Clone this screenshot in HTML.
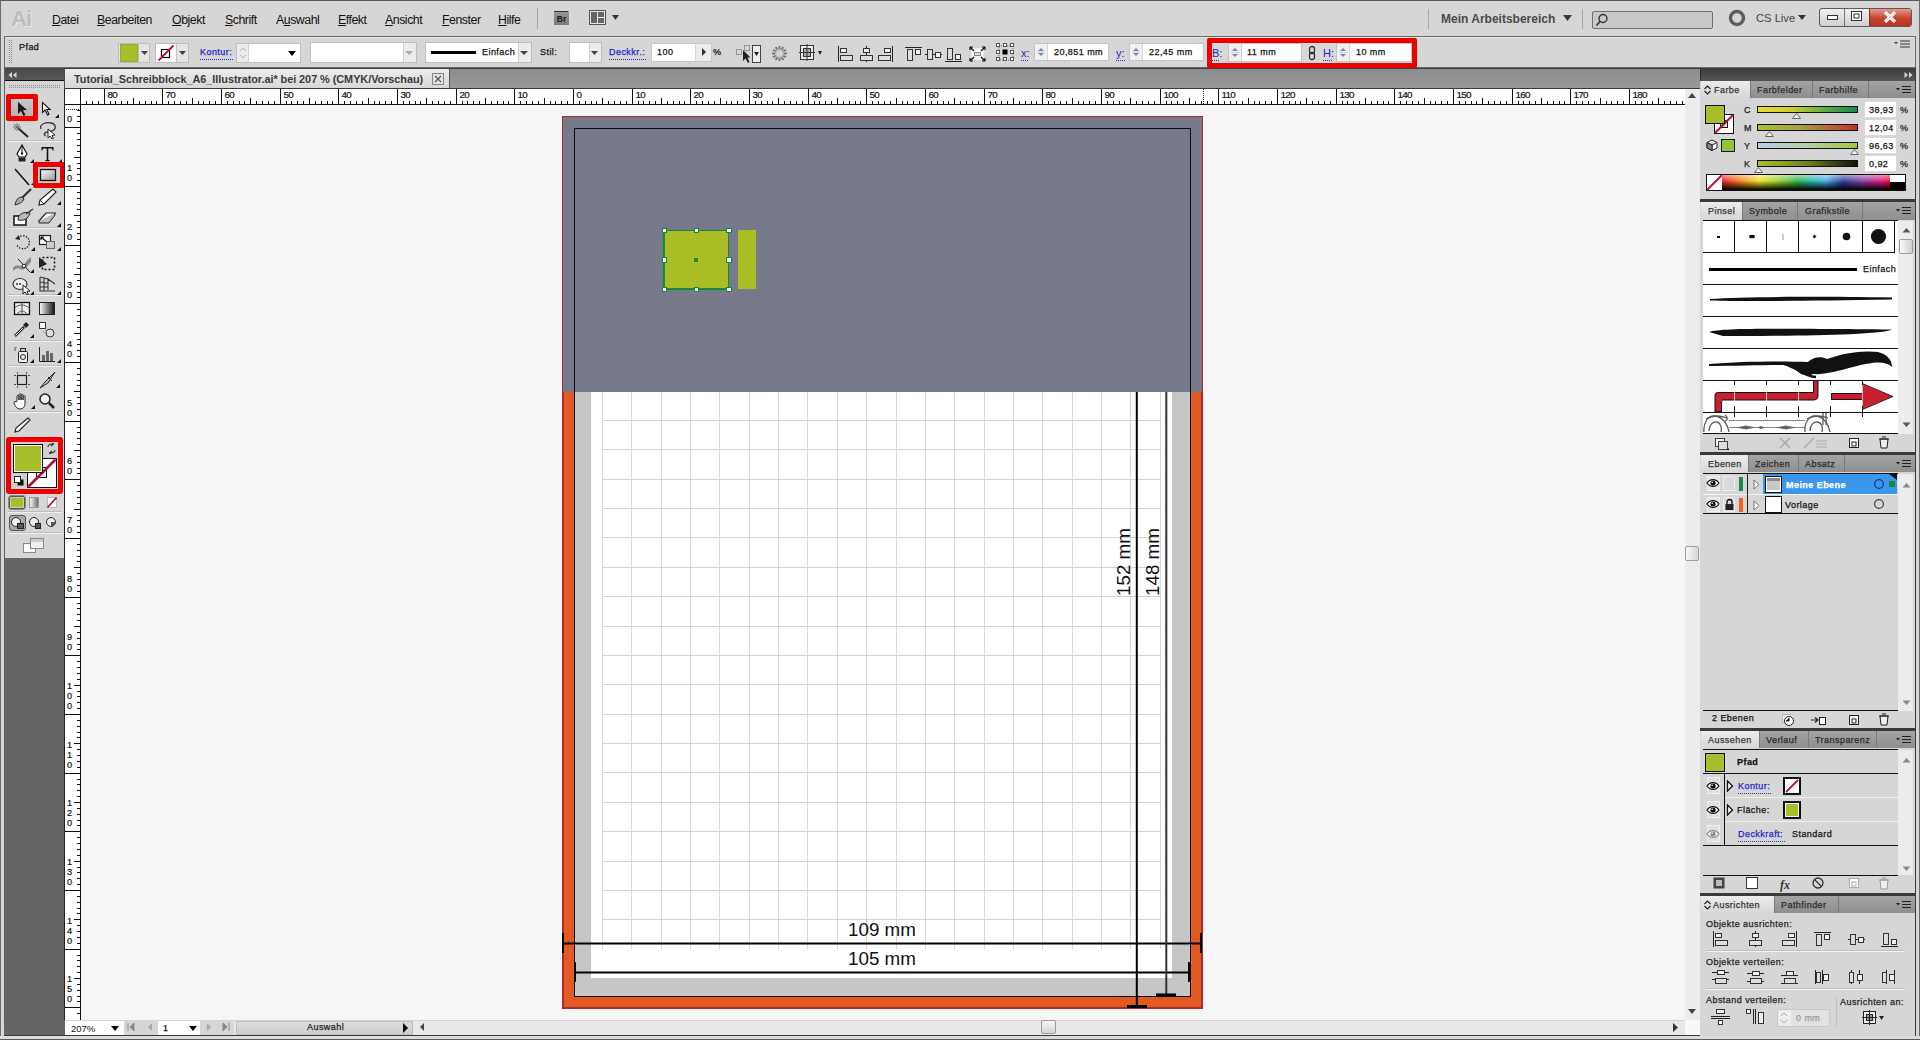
<!DOCTYPE html>
<html><head><meta charset="utf-8"><style>
html,body{margin:0;padding:0;width:1920px;height:1040px;overflow:hidden;background:#d4d4d4}
body{position:relative;font-family:"Liberation Sans", sans-serif}
div,span,svg{position:absolute;}
div div, div span{position:absolute}
span{white-space:nowrap}
</style></head><body>
<div style="left:0px;top:0px;width:1920px;height:1040px;background:#d6d6d6"></div>
<div style="left:0px;top:0px;width:1920px;height:1px;background:#5a5a5a"></div>
<div style="left:0px;top:0px;width:1px;height:1040px;background:#6a6a6a"></div>
<div style="left:1919px;top:0px;width:1px;height:1040px;background:#6a6a6a"></div>
<div style="left:0px;top:1039px;width:1920px;height:1px;background:#5a5a5a"></div>
<span style="left:11px;top:8.38px;font-size:22px;line-height:22px;color:#bdbdbd;font-weight:700;letter-spacing:-1px;text-shadow:1px 1px 0 #e8e8e8">Ai</span>
<span style="left:52px;top:13.99px;font-size:12.3px;line-height:12.3px;color:#111;font-weight:400;letter-spacing:-0.45px"><u>D</u>atei</span>
<span style="left:97px;top:13.99px;font-size:12.3px;line-height:12.3px;color:#111;font-weight:400;letter-spacing:-0.45px"><u>B</u>earbeiten</span>
<span style="left:172px;top:13.99px;font-size:12.3px;line-height:12.3px;color:#111;font-weight:400;letter-spacing:-0.45px"><u>O</u>bjekt</span>
<span style="left:225px;top:13.99px;font-size:12.3px;line-height:12.3px;color:#111;font-weight:400;letter-spacing:-0.45px"><u>S</u>chrift</span>
<span style="left:276px;top:13.99px;font-size:12.3px;line-height:12.3px;color:#111;font-weight:400;letter-spacing:-0.45px">A<u>u</u>swahl</span>
<span style="left:338px;top:13.99px;font-size:12.3px;line-height:12.3px;color:#111;font-weight:400;letter-spacing:-0.45px"><u>E</u>ffekt</span>
<span style="left:385px;top:13.99px;font-size:12.3px;line-height:12.3px;color:#111;font-weight:400;letter-spacing:-0.45px"><u>A</u>nsicht</span>
<span style="left:442px;top:13.99px;font-size:12.3px;line-height:12.3px;color:#111;font-weight:400;letter-spacing:-0.45px"><u>F</u>enster</span>
<span style="left:498px;top:13.99px;font-size:12.3px;line-height:12.3px;color:#111;font-weight:400;letter-spacing:-0.45px"><u>H</u>ilfe</span>
<div style="left:537px;top:8px;width:1px;height:21px;background:#a8a8a8"></div>
<svg style="left:553px;top:10px;" width="18" height="16" viewBox="0 0 18 16"><defs><linearGradient id="brg" x1="0" y1="0" x2="0" y2="1"><stop offset="0" stop-color="#9a9a9a"/><stop offset="1" stop-color="#7a7a7a"/></linearGradient></defs><rect x="1" y="1" width="15" height="14" fill="url(#brg)"/><path d="M1 1.5 H15" stroke="#333"/><text x="8.5" y="12" font-size="8.5" font-family="Liberation Sans" font-weight="700" fill="#1a1a1a" text-anchor="middle">Br</text></svg>
<svg style="left:589px;top:10px;" width="34" height="16" viewBox="0 0 34 16"><rect x="0.5" y="0.5" width="16" height="14" fill="#e8e8e8" stroke="#555"/><rect x="2" y="2" width="6" height="11" fill="#666"/><rect x="9" y="2" width="6" height="5" fill="#666"/><rect x="9" y="8" width="6" height="5" fill="#666"/><path d="M23 5 L30 5 L26.5 10 Z" fill="#333"/></svg>
<div style="left:1428px;top:9px;width:1px;height:20px;background:#a8a8a8"></div>
<span style="left:1441px;top:12.84px;font-size:12px;line-height:12px;color:#4a4a4a;font-weight:700;">Mein Arbeitsbereich</span>
<svg style="left:1563px;top:15px;" width="10" height="7" viewBox="0 0 10 7"><path d="M0 0 L9 0 L4.5 6 Z" fill="#3a3a3a"/></svg>
<div style="left:1582px;top:9px;width:1px;height:20px;background:#a8a8a8"></div>
<div style="left:1592px;top:11px;width:121px;height:18px;background:#c8c8c8;border:1px solid #6f6f6f;border-radius:2px;box-sizing:border-box"></div>
<svg style="left:1595px;top:13px;" width="14" height="14" viewBox="0 0 14 14"><circle cx="8" cy="5.5" r="4" fill="none" stroke="#333" stroke-width="1.4"/><path d="M5 8.5 L1.5 12.5" stroke="#333" stroke-width="1.6"/></svg>
<svg style="left:1728px;top:9px;" width="18" height="18" viewBox="0 0 18 18"><circle cx="9" cy="9" r="6.5" fill="none" stroke="#5c5c5c" stroke-width="3.4"/></svg>
<span style="left:1756px;top:13.02px;font-size:11.2px;line-height:11.2px;color:#444;font-weight:400;">CS Live</span>
<svg style="left:1798px;top:15px;" width="9" height="6" viewBox="0 0 9 6"><path d="M0 0 L8 0 L4 5 Z" fill="#333"/></svg>
<div style="left:1819px;top:8px;width:93px;height:19px;border:1px solid #5a5a5a;border-radius:3px;box-sizing:border-box;background:linear-gradient(#f0f0f0,#cfcfcf);overflow:hidden"><div style="left:24px;top:0;width:1px;height:19px;background:#777"></div><div style="left:49px;top:0;width:44px;height:19px;background:linear-gradient(#e89a8a,#c8402c 50%,#b83020)"></div><div style="left:49px;top:0;width:1px;height:19px;background:#6a3a3a"></div></div>
<svg style="left:1827px;top:15px;" width="12" height="6" viewBox="0 0 12 6"><rect x="0.5" y="0.5" width="10" height="4" fill="#fff" stroke="#333"/></svg>
<svg style="left:1851px;top:11px;" width="12" height="11" viewBox="0 0 12 11"><rect x="0.5" y="0.5" width="10" height="9" fill="#fff" stroke="#333"/><rect x="3" y="3" width="5" height="4" fill="none" stroke="#333"/></svg>
<svg style="left:1883px;top:11px;" width="14" height="12" viewBox="0 0 14 12"><path d="M2 1 L12 11 M12 1 L2 11" stroke="#fff" stroke-width="3.2"/><path d="M2 1 L12 11 M12 1 L2 11" stroke="#7a2a20" stroke-width="0.6" opacity="0.3"/></svg>
<div style="left:4px;top:36px;width:1912px;height:32px;background:#d6d6d6;border:1px solid #6a6a6a;box-sizing:border-box"></div>
<div style="left:5px;top:37px;width:1910px;height:1px;background:#e6e6e6"></div>
<svg style="left:9px;top:40px;" width="4" height="25" viewBox="0 0 4 25"><rect x="0" y="0" width="1" height="1" fill="#8a8a8a"/><rect x="2" y="0" width="1" height="1" fill="#8a8a8a"/><rect x="0" y="2" width="1" height="1" fill="#8a8a8a"/><rect x="2" y="2" width="1" height="1" fill="#8a8a8a"/><rect x="0" y="4" width="1" height="1" fill="#8a8a8a"/><rect x="2" y="4" width="1" height="1" fill="#8a8a8a"/><rect x="0" y="6" width="1" height="1" fill="#8a8a8a"/><rect x="2" y="6" width="1" height="1" fill="#8a8a8a"/><rect x="0" y="8" width="1" height="1" fill="#8a8a8a"/><rect x="2" y="8" width="1" height="1" fill="#8a8a8a"/><rect x="0" y="10" width="1" height="1" fill="#8a8a8a"/><rect x="2" y="10" width="1" height="1" fill="#8a8a8a"/><rect x="0" y="12" width="1" height="1" fill="#8a8a8a"/><rect x="2" y="12" width="1" height="1" fill="#8a8a8a"/><rect x="0" y="14" width="1" height="1" fill="#8a8a8a"/><rect x="2" y="14" width="1" height="1" fill="#8a8a8a"/><rect x="0" y="16" width="1" height="1" fill="#8a8a8a"/><rect x="2" y="16" width="1" height="1" fill="#8a8a8a"/><rect x="0" y="18" width="1" height="1" fill="#8a8a8a"/><rect x="2" y="18" width="1" height="1" fill="#8a8a8a"/><rect x="0" y="20" width="1" height="1" fill="#8a8a8a"/><rect x="2" y="20" width="1" height="1" fill="#8a8a8a"/><rect x="0" y="22" width="1" height="1" fill="#8a8a8a"/><rect x="2" y="22" width="1" height="1" fill="#8a8a8a"/></svg>
<span style="left:19px;top:43.18px;font-size:9.0px;line-height:9.0px;color:#111;font-weight:400;letter-spacing:0.45px;-webkit-text-stroke:0.25px #111;">Pfad</span>
<div style="left:118px;top:43px;width:32px;height:20px;background:#e4e4e4;border:1px solid #bcbcbc;box-sizing:border-box"></div>
<div style="left:120px;top:44px;width:18px;height:18px;background:#a9be2b;border:1px solid #98a830;box-sizing:border-box"></div>
<div style="left:138px;top:44px;width:1px;height:18px;background:#c4c4c4"></div>
<svg style="left:141px;top:51px;" width="8" height="5" viewBox="0 0 8 5"><path d="M0 0 L7 0 L3.5 4 Z" fill="#444"/></svg>
<div style="left:155px;top:43px;width:34px;height:20px;background:#e4e4e4;border:1px solid #bcbcbc;box-sizing:border-box"></div>
<div style="left:156px;top:44px;width:20px;height:18px;background:#fff"></div>
<svg style="left:157px;top:44px;" width="18" height="18" viewBox="0 0 18 18"><rect x="4.5" y="5.5" width="8" height="8" fill="none" stroke="#000" stroke-width="1.2"/><path d="M1.5 16.5 L16.5 1.5" stroke="#b0143c" stroke-width="1.8"/></svg>
<div style="left:176px;top:44px;width:1px;height:18px;background:#c4c4c4"></div>
<svg style="left:179px;top:51px;" width="8" height="5" viewBox="0 0 8 5"><path d="M0 0 L7 0 L3.5 4 Z" fill="#444"/></svg>
<span style="left:200px;top:48.38px;font-size:9.0px;line-height:9.0px;color:#2424c8;font-weight:400;letter-spacing:0.45px;-webkit-text-stroke:0.25px #2424c8;">Kontur:</span>
<div style="left:200px;top:59px;width:33px;height:1px;background:repeating-linear-gradient(90deg,#3030c0 0 1px,transparent 1px 2px)"></div>
<div style="left:236px;top:43px;width:65px;height:20px;background:#fff;border:1px solid #c0c0c0;box-sizing:border-box"></div>
<div style="left:237px;top:44px;width:12px;height:18px;background:#ececec;border-right:1px solid #d0d0d0;box-sizing:border-box"></div>
<svg style="left:239px;top:46px;" width="8" height="14" viewBox="0 0 8 14"><path d="M1 5 L4 2 L7 5" fill="none" stroke="#b0b0b0"/><path d="M1 9 L4 12 L7 9" fill="none" stroke="#b0b0b0"/></svg>
<svg style="left:288px;top:51px;" width="9" height="6" viewBox="0 0 9 6"><path d="M0 0 L8 0 L4 5 Z" fill="#000"/></svg>
<div style="left:310px;top:42px;width:107px;height:21px;background:#fff;border:1px solid #bdbdbd;box-sizing:border-box"></div>
<div style="left:403px;top:43px;width:13px;height:19px;background:#ececec;border-left:1px solid #d0d0d0;box-sizing:border-box"></div>
<svg style="left:405px;top:51px;" width="9" height="5" viewBox="0 0 9 5"><path d="M0 0 L8 0 L4 4 Z" fill="#aaa"/></svg>
<div style="left:425px;top:42px;width:107px;height:21px;background:#fff;border:1px solid #bdbdbd;box-sizing:border-box"></div>
<div style="left:431px;top:51px;width:45px;height:3px;background:#000"></div>
<span style="left:482px;top:48.38px;font-size:9.0px;line-height:9.0px;color:#111;font-weight:400;letter-spacing:0.45px;-webkit-text-stroke:0.25px #111;">Einfach</span>
<div style="left:518px;top:43px;width:13px;height:19px;background:#ececec;border-left:1px solid #d0d0d0;box-sizing:border-box"></div>
<svg style="left:520px;top:51px;" width="9" height="5" viewBox="0 0 9 5"><path d="M0 0 L8 0 L4 4 Z" fill="#444"/></svg>
<span style="left:540px;top:48.38px;font-size:9.0px;line-height:9.0px;color:#111;font-weight:400;letter-spacing:0.45px;-webkit-text-stroke:0.25px #111;">Stil:</span>
<div style="left:569px;top:42px;width:33px;height:21px;background:#fff;border:1px solid #bdbdbd;box-sizing:border-box"></div>
<div style="left:589px;top:43px;width:12px;height:19px;background:#ececec;border-left:1px solid #d0d0d0;box-sizing:border-box"></div>
<svg style="left:591px;top:51px;" width="8" height="5" viewBox="0 0 8 5"><path d="M0 0 L7 0 L3.5 4 Z" fill="#444"/></svg>
<span style="left:609px;top:48.38px;font-size:9.0px;line-height:9.0px;color:#2424c8;font-weight:400;letter-spacing:0.45px;-webkit-text-stroke:0.25px #2424c8;">Deckkr.:</span>
<div style="left:609px;top:59px;width:38px;height:1px;background:repeating-linear-gradient(90deg,#3030c0 0 1px,transparent 1px 2px)"></div>
<div style="left:651px;top:43px;width:61px;height:19px;background:#fff;border:1px solid #c8c8c8;box-sizing:border-box"></div>
<div style="left:695px;top:44px;width:16px;height:17px;background:#ececec;border-left:1px solid #d8d8d8;box-sizing:border-box"></div>
<svg style="left:701px;top:48px;" width="6" height="9" viewBox="0 0 6 9"><path d="M1 0 L5 4 L1 8 Z" fill="#333"/></svg>
<span style="left:657px;top:48.38px;font-size:9.0px;line-height:9.0px;color:#111;font-weight:400;letter-spacing:0.45px;-webkit-text-stroke:0.25px #111;">100</span>
<span style="left:713px;top:48.38px;font-size:9.0px;line-height:9.0px;color:#111;font-weight:400;letter-spacing:0.45px;-webkit-text-stroke:0.25px #111;">%</span>
<svg style="left:735px;top:44px;" width="28" height="20" viewBox="0 0 28 20"><rect x="1.5" y="5.5" width="5" height="5" fill="none" stroke="#555" stroke-dasharray="1 1"/><rect x="9.5" y="1.5" width="5" height="5" fill="none" stroke="#555" stroke-dasharray="1 1"/><path d="M8 6 L8 17 L10.5 14.5 L13 19 L14.5 18 L12.5 13.5 L15.5 13.5 Z" fill="#222"/><rect x="17.5" y="1.5" width="8" height="17" fill="#eee" stroke="#444"/><path d="M19 8 L24 8 L21.5 12 Z" fill="#222"/></svg>
<svg style="left:771px;top:45px;" width="17" height="17" viewBox="0 0 17 17"><path d="M8.5 8.5 L16.00 8.50" stroke="#777" stroke-width="2"/><path d="M8.5 8.5 L15.00 12.25" stroke="#777" stroke-width="2"/><path d="M8.5 8.5 L12.25 15.00" stroke="#777" stroke-width="2"/><path d="M8.5 8.5 L8.50 16.00" stroke="#777" stroke-width="2"/><path d="M8.5 8.5 L4.75 15.00" stroke="#777" stroke-width="2"/><path d="M8.5 8.5 L2.00 12.25" stroke="#777" stroke-width="2"/><path d="M8.5 8.5 L1.00 8.50" stroke="#777" stroke-width="2"/><path d="M8.5 8.5 L2.00 4.75" stroke="#777" stroke-width="2"/><path d="M8.5 8.5 L4.75 2.00" stroke="#777" stroke-width="2"/><path d="M8.5 8.5 L8.50 1.00" stroke="#777" stroke-width="2"/><path d="M8.5 8.5 L12.25 2.00" stroke="#777" stroke-width="2"/><path d="M8.5 8.5 L15.00 4.75" stroke="#777" stroke-width="2"/><circle cx="8.5" cy="8.5" r="4.5" fill="#bbb"/><circle cx="8.5" cy="8.5" r="3" fill="#d6d6d6"/></svg>
<svg style="left:799px;top:44px;" width="24" height="19" viewBox="0 0 24 19"><rect x="1.5" y="1.5" width="13" height="14" fill="#eee" stroke="#333"/><rect x="4.5" y="4.5" width="7" height="8" fill="#aaa" stroke="#333"/><path d="M0 8.5 H16 M8 0 V17" stroke="#333"/><path d="M19 7 L23 7 L21 11 Z" fill="#222"/></svg>
<svg style="left:837px;top:46px;" width="17" height="16" viewBox="0 0 17 16"><path d="M1.5 0 V16" stroke="#222"/><rect x="3.5" y="2.5" width="6" height="4" fill="#eee" stroke="#333"/><rect x="3.5" y="9.5" width="12" height="5" fill="#ddd" stroke="#333"/></svg>
<svg style="left:858px;top:46px;" width="17" height="16" viewBox="0 0 17 16"><path d="M8.5 0 V16" stroke="#222"/><rect x="5.5" y="2.5" width="6" height="4" fill="#eee" stroke="#333"/><rect x="2.5" y="9.5" width="12" height="5" fill="#ddd" stroke="#333"/></svg>
<svg style="left:877px;top:46px;" width="17" height="16" viewBox="0 0 17 16"><path d="M15.5 0 V16" stroke="#222"/><rect x="7.5" y="2.5" width="6" height="4" fill="#eee" stroke="#333"/><rect x="1.5" y="9.5" width="12" height="5" fill="#ddd" stroke="#333"/></svg>
<svg style="left:905px;top:46px;" width="17" height="16" viewBox="0 0 17 16"><path d="M0 1.5 H17" stroke="#222"/><rect x="2.5" y="3.5" width="5" height="11" fill="#ddd" stroke="#333"/><rect x="10.5" y="3.5" width="5" height="5" fill="#eee" stroke="#333"/></svg>
<svg style="left:925px;top:46px;" width="17" height="16" viewBox="0 0 17 16"><path d="M0 8.5 H17" stroke="#222"/><rect x="2.5" y="3.5" width="5" height="10" fill="#ddd" stroke="#333"/><rect x="10.5" y="6.5" width="5" height="5" fill="#eee" stroke="#333"/></svg>
<svg style="left:945px;top:46px;" width="17" height="16" viewBox="0 0 17 16"><path d="M0 15.5 H17" stroke="#222"/><rect x="2.5" y="2.5" width="5" height="11" fill="#ddd" stroke="#333"/><rect x="10.5" y="8.5" width="5" height="5" fill="#eee" stroke="#333"/></svg>
<svg style="left:969px;top:46px;" width="17" height="16" viewBox="0 0 17 16"><rect x="2.5" y="2.5" width="12" height="11" fill="#fff"/><rect x="5.5" y="6.5" width="6" height="3" fill="#ddd" stroke="#888"/><path d="M1 1 L5 5 M16 1 L12 5 M1 15 L5 11 M16 15 L12 11" stroke="#111" stroke-width="1.4"/><path d="M1 1 h3 M1 1 v3 M16 1 h-3 M16 1 v3 M1 15 h3 M1 15 v-3 M16 15 h-3 M16 15 v-3" stroke="#111" stroke-width="1.2"/></svg>
<svg style="left:996px;top:43px;" width="20" height="20" viewBox="0 0 20 20"><rect x="3" y="3" width="14" height="14" fill="none" stroke="#666" stroke-dasharray="1 1"/><rect x="0.5" y="0.5" width="3" height="3" fill="#fff" stroke="#555"/><rect x="0.5" y="7.5" width="3" height="3" fill="#fff" stroke="#555"/><rect x="0.5" y="14.5" width="3" height="3" fill="#fff" stroke="#555"/><rect x="7.5" y="0.5" width="3" height="3" fill="#fff" stroke="#555"/><rect x="6.5" y="6.5" width="5" height="5" fill="#000"/><rect x="7.5" y="14.5" width="3" height="3" fill="#fff" stroke="#555"/><rect x="14.5" y="0.5" width="3" height="3" fill="#fff" stroke="#555"/><rect x="14.5" y="7.5" width="3" height="3" fill="#fff" stroke="#555"/><rect x="14.5" y="14.5" width="3" height="3" fill="#fff" stroke="#555"/></svg>
<span style="left:1021px;top:47.69px;font-size:11px;line-height:11px;color:#2424c8;font-weight:400;">x:</span>
<div style="left:1021px;top:60px;width:8px;height:1px;background:repeating-linear-gradient(90deg,#3030c0 0 1px,transparent 1px 2px)"></div>
<div style="left:1034px;top:43px;width:75px;height:18px;background:#fff;border:1px solid #c4c4c4;box-sizing:border-box"></div>
<div style="left:1035px;top:44px;width:13px;height:16px;background:#f0f0f0;border-right:1px solid #d4d4d4;box-sizing:border-box"></div>
<svg style="left:1036px;top:45px;" width="10" height="14" viewBox="0 0 10 14"><path d="M2 6 L5 3 L8 6 Z" fill="#7a82b8"/><path d="M2 8 L5 11 L8 8 Z" fill="#7a82b8"/><path d="M1 7.0 H9" stroke="#d0d0d0"/></svg>
<span style="left:1054px;top:48.38px;font-size:9.0px;line-height:9.0px;color:#111;font-weight:400;letter-spacing:0.45px;-webkit-text-stroke:0.25px #111;">20,851 mm</span>
<span style="left:1116px;top:47.69px;font-size:11px;line-height:11px;color:#2424c8;font-weight:400;">y:</span>
<div style="left:1116px;top:60px;width:10px;height:1px;background:repeating-linear-gradient(90deg,#3030c0 0 1px,transparent 1px 2px)"></div>
<div style="left:1129px;top:43px;width:75px;height:18px;background:#fff;border:1px solid #c4c4c4;box-sizing:border-box"></div>
<div style="left:1130px;top:44px;width:13px;height:16px;background:#f0f0f0;border-right:1px solid #d4d4d4;box-sizing:border-box"></div>
<svg style="left:1131px;top:45px;" width="10" height="14" viewBox="0 0 10 14"><path d="M2 6 L5 3 L8 6 Z" fill="#7a82b8"/><path d="M2 8 L5 11 L8 8 Z" fill="#7a82b8"/><path d="M1 7.0 H9" stroke="#d0d0d0"/></svg>
<span style="left:1149px;top:48.38px;font-size:9.0px;line-height:9.0px;color:#111;font-weight:400;letter-spacing:0.45px;-webkit-text-stroke:0.25px #111;">22,45 mm</span>
<div style="left:1207px;top:38px;width:210px;height:30px;background:#c8c8c8;border:5px solid #ee0000;box-sizing:border-box;border-radius:2px"></div>
<div style="left:1212px;top:43px;width:200px;height:20px;background:#d8d8d8"></div>
<span style="left:1212px;top:47.69px;font-size:11px;line-height:11px;color:#2424c8;font-weight:400;">B:</span>
<div style="left:1212px;top:60px;width:8px;height:1px;background:repeating-linear-gradient(90deg,#3030c0 0 1px,transparent 1px 2px)"></div>
<div style="left:1228px;top:43px;width:74px;height:19px;background:#fff;border:1px solid #c4c4c4;box-sizing:border-box"></div>
<div style="left:1229px;top:44px;width:13px;height:17px;background:#f0f0f0;border-right:1px solid #d4d4d4;box-sizing:border-box"></div>
<svg style="left:1230px;top:45px;" width="10" height="15" viewBox="0 0 10 15"><path d="M2 6 L5 3 L8 6 Z" fill="#7a82b8"/><path d="M2 9 L5 12 L8 9 Z" fill="#7a82b8"/><path d="M1 7.5 H9" stroke="#d0d0d0"/></svg>
<span style="left:1247px;top:48.38px;font-size:9.0px;line-height:9.0px;color:#111;font-weight:400;letter-spacing:0.45px;-webkit-text-stroke:0.25px #111;">11 mm</span>
<svg style="left:1307px;top:45px;" width="11" height="17" viewBox="0 0 11 17"><rect x="2.5" y="1.5" width="5" height="7" rx="2.5" fill="none" stroke="#333" stroke-width="1.3"/><rect x="2.5" y="7.5" width="5" height="7" rx="2.5" fill="none" stroke="#333" stroke-width="1.3"/></svg>
<span style="left:1323px;top:47.69px;font-size:11px;line-height:11px;color:#2424c8;font-weight:400;">H:</span>
<div style="left:1323px;top:60px;width:10px;height:1px;background:repeating-linear-gradient(90deg,#3030c0 0 1px,transparent 1px 2px)"></div>
<div style="left:1336px;top:43px;width:76px;height:19px;background:#fff;border:1px solid #c4c4c4;box-sizing:border-box"></div>
<div style="left:1337px;top:44px;width:13px;height:17px;background:#f0f0f0;border-right:1px solid #d4d4d4;box-sizing:border-box"></div>
<svg style="left:1338px;top:45px;" width="10" height="15" viewBox="0 0 10 15"><path d="M2 6 L5 3 L8 6 Z" fill="#7a82b8"/><path d="M2 9 L5 12 L8 9 Z" fill="#7a82b8"/><path d="M1 7.5 H9" stroke="#d0d0d0"/></svg>
<span style="left:1356px;top:48.38px;font-size:9.0px;line-height:9.0px;color:#111;font-weight:400;letter-spacing:0.45px;-webkit-text-stroke:0.25px #111;">10 mm</span>
<svg style="left:1894px;top:40px;" width="18" height="10" viewBox="0 0 18 10"><path d="M0 2 L4 2 L2 4 Z" fill="#333"/><path d="M6 1 H16 M6 4 H16 M6 7 H16" stroke="#333"/></svg>
<div style="left:65px;top:68px;width:1635px;height:21px;background:linear-gradient(#8c8c8c,#999999)"></div>
<div style="left:65px;top:68px;width:1635px;height:1px;background:#3c3c3c"></div>
<div style="left:65px;top:88px;width:1635px;height:1px;background:#3a3a3a"></div>
<div style="left:5px;top:68px;width:59px;height:12px;background:linear-gradient(#484848,#585858)"></div>
<div style="left:5px;top:80px;width:59px;height:1px;background:#111"></div>
<svg style="left:8px;top:72px;" width="9" height="6" viewBox="0 0 9 6"><path d="M4 0 L0.5 3 L4 6 Z M8.5 0 L5 3 L8.5 6 Z" fill="#d8d8d8"/></svg>
<div style="left:65px;top:69px;width:384px;height:19px;background:linear-gradient(#ececec,#d8d8d8)"></div>
<div style="left:449px;top:69px;width:1px;height:19px;background:#555"></div>
<span style="left:74px;top:73.77px;font-size:10.9px;line-height:10.9px;color:#3a3a3a;font-weight:700;letter-spacing:-0.05px">Tutorial_Schreibblock_A6_Illustrator.ai* bei 207 % (CMYK/Vorschau)</span>
<div style="left:432px;top:73px;width:12px;height:12px;background:#e2e2e2;border:1px solid #888;box-sizing:border-box"></div>
<svg style="left:432px;top:73px;" width="12" height="12" viewBox="0 0 12 12"><path d="M3 3 L9 9 M9 3 L3 9" stroke="#555" stroke-width="1.2"/></svg>
<div style="left:1700px;top:68px;width:215px;height:13px;background:linear-gradient(#3c3c3c,#545454)"></div>
<svg style="left:1904px;top:72px;" width="9" height="6" viewBox="0 0 9 6"><path d="M0.5 0 L4 3 L0.5 6 Z M5 0 L8.5 3 L5 6 Z" fill="#d8d8d8"/></svg>
<div style="left:4px;top:81px;width:61px;height:477px;background:#d6d6d6"></div>
<div style="left:4px;top:558px;width:61px;height:477px;background:#656565"></div>
<div style="left:64px;top:68px;width:1px;height:952px;background:#4a4a4a"></div>
<div style="left:4px;top:68px;width:1px;height:952px;background:#5a5a5a"></div>
<svg style="left:9px;top:85px;" width="52" height="4" viewBox="0 0 52 4"><rect x="0" y="0" width="1" height="1" fill="#8a8a8a"/><rect x="0" y="2" width="1" height="1" fill="#8a8a8a"/><rect x="2" y="0" width="1" height="1" fill="#8a8a8a"/><rect x="2" y="2" width="1" height="1" fill="#8a8a8a"/><rect x="4" y="0" width="1" height="1" fill="#8a8a8a"/><rect x="4" y="2" width="1" height="1" fill="#8a8a8a"/><rect x="6" y="0" width="1" height="1" fill="#8a8a8a"/><rect x="6" y="2" width="1" height="1" fill="#8a8a8a"/><rect x="8" y="0" width="1" height="1" fill="#8a8a8a"/><rect x="8" y="2" width="1" height="1" fill="#8a8a8a"/><rect x="10" y="0" width="1" height="1" fill="#8a8a8a"/><rect x="10" y="2" width="1" height="1" fill="#8a8a8a"/><rect x="12" y="0" width="1" height="1" fill="#8a8a8a"/><rect x="12" y="2" width="1" height="1" fill="#8a8a8a"/><rect x="14" y="0" width="1" height="1" fill="#8a8a8a"/><rect x="14" y="2" width="1" height="1" fill="#8a8a8a"/><rect x="16" y="0" width="1" height="1" fill="#8a8a8a"/><rect x="16" y="2" width="1" height="1" fill="#8a8a8a"/><rect x="18" y="0" width="1" height="1" fill="#8a8a8a"/><rect x="18" y="2" width="1" height="1" fill="#8a8a8a"/><rect x="20" y="0" width="1" height="1" fill="#8a8a8a"/><rect x="20" y="2" width="1" height="1" fill="#8a8a8a"/><rect x="22" y="0" width="1" height="1" fill="#8a8a8a"/><rect x="22" y="2" width="1" height="1" fill="#8a8a8a"/><rect x="24" y="0" width="1" height="1" fill="#8a8a8a"/><rect x="24" y="2" width="1" height="1" fill="#8a8a8a"/><rect x="26" y="0" width="1" height="1" fill="#8a8a8a"/><rect x="26" y="2" width="1" height="1" fill="#8a8a8a"/><rect x="28" y="0" width="1" height="1" fill="#8a8a8a"/><rect x="28" y="2" width="1" height="1" fill="#8a8a8a"/><rect x="30" y="0" width="1" height="1" fill="#8a8a8a"/><rect x="30" y="2" width="1" height="1" fill="#8a8a8a"/><rect x="32" y="0" width="1" height="1" fill="#8a8a8a"/><rect x="32" y="2" width="1" height="1" fill="#8a8a8a"/><rect x="34" y="0" width="1" height="1" fill="#8a8a8a"/><rect x="34" y="2" width="1" height="1" fill="#8a8a8a"/><rect x="36" y="0" width="1" height="1" fill="#8a8a8a"/><rect x="36" y="2" width="1" height="1" fill="#8a8a8a"/><rect x="38" y="0" width="1" height="1" fill="#8a8a8a"/><rect x="38" y="2" width="1" height="1" fill="#8a8a8a"/><rect x="40" y="0" width="1" height="1" fill="#8a8a8a"/><rect x="40" y="2" width="1" height="1" fill="#8a8a8a"/><rect x="42" y="0" width="1" height="1" fill="#8a8a8a"/><rect x="42" y="2" width="1" height="1" fill="#8a8a8a"/><rect x="44" y="0" width="1" height="1" fill="#8a8a8a"/><rect x="44" y="2" width="1" height="1" fill="#8a8a8a"/><rect x="46" y="0" width="1" height="1" fill="#8a8a8a"/><rect x="46" y="2" width="1" height="1" fill="#8a8a8a"/><rect x="48" y="0" width="1" height="1" fill="#8a8a8a"/><rect x="48" y="2" width="1" height="1" fill="#8a8a8a"/><rect x="50" y="0" width="1" height="1" fill="#8a8a8a"/><rect x="50" y="2" width="1" height="1" fill="#8a8a8a"/></svg>
<div style="left:8px;top:141px;width:54px;height:1px;background:#f0f0f0"></div>
<div style="left:8px;top:140px;width:54px;height:1px;background:#bdbdbd"></div>
<div style="left:8px;top:228px;width:54px;height:1px;background:#f0f0f0"></div>
<div style="left:8px;top:227px;width:54px;height:1px;background:#bdbdbd"></div>
<div style="left:8px;top:295px;width:54px;height:1px;background:#f0f0f0"></div>
<div style="left:8px;top:294px;width:54px;height:1px;background:#bdbdbd"></div>
<div style="left:8px;top:341px;width:54px;height:1px;background:#f0f0f0"></div>
<div style="left:8px;top:340px;width:54px;height:1px;background:#bdbdbd"></div>
<div style="left:8px;top:366px;width:54px;height:1px;background:#f0f0f0"></div>
<div style="left:8px;top:365px;width:54px;height:1px;background:#bdbdbd"></div>
<div style="left:8px;top:412px;width:54px;height:1px;background:#f0f0f0"></div>
<div style="left:8px;top:411px;width:54px;height:1px;background:#bdbdbd"></div>
<div style="left:8px;top:512px;width:54px;height:1px;background:#f0f0f0"></div>
<div style="left:8px;top:511px;width:54px;height:1px;background:#bdbdbd"></div>
<div style="left:8px;top:533px;width:54px;height:1px;background:#f0f0f0"></div>
<div style="left:8px;top:532px;width:54px;height:1px;background:#bdbdbd"></div>
<div style="left:6px;top:94px;width:32px;height:27px;border:5px solid #ee0000;box-sizing:border-box;border-radius:2px;background:#bdbdbd"></div>
<div style="left:11px;top:99px;width:22px;height:17px;background:linear-gradient(#c8c8c8,#b4b4b4)"></div>
<svg style="left:15px;top:101px;" width="12" height="16" viewBox="0 0 12 16"><path d="M3 1 L3 13 L6 10 L8.5 15 L10.5 14 L8 9 L12 9 Z" fill="#1a1a1a"/></svg>
<svg style="left:41px;top:101px;" width="11" height="16" viewBox="0 0 11 16"><path d="M1.5 1.5 L1.5 11.5 L4 9 L6.5 14 L8 13.2 L5.8 8.5 L9 8.5 Z" fill="#fff" stroke="#111" stroke-width="1.1"/></svg>
<svg style="left:55px;top:114px;" width="4" height="4" viewBox="0 0 4 4"><path d="M4 0 L4 4 L0 4 Z" fill="#111"/></svg>
<svg style="left:12px;top:122px;" width="18" height="16" viewBox="0 0 18 16"><path d="M6 6 L16 15" stroke="#222" stroke-width="2"/><path d="M5 1 V9 M1 5 H9 M2 2 L8 8 M8 2 L2 8" stroke="#666" stroke-width="0.9"/></svg>
<svg style="left:38px;top:121px;" width="20" height="18" viewBox="0 0 20 18"><path d="M3 8 C1 3, 8 1, 13 2 C18 3, 19 8, 14 10 L10 11 C6 11, 5 14, 8 15" fill="none" stroke="#333" stroke-width="1.3"/><path d="M10 8 L10 17 L12 15 L14 18 L15.5 17.5 L14 14.5 L17 14 Z" fill="#fff" stroke="#222"/></svg>
<svg style="left:15px;top:144px;" width="14" height="19" viewBox="0 0 14 19"><path d="M7 1 L12 10 L10 13 L4 13 L2 10 Z" fill="#fff" stroke="#111" stroke-width="1.2"/><path d="M7 2 V9" stroke="#111"/><circle cx="7" cy="9.5" r="1.2" fill="#111"/><rect x="3.5" y="13.5" width="7" height="4" fill="#222"/></svg>
<svg style="left:30px;top:159px;" width="4" height="4" viewBox="0 0 4 4"><path d="M4 0 L4 4 L0 4 Z" fill="#111"/></svg>
<svg style="left:40px;top:146px;" width="15" height="16" viewBox="0 0 15 16"><path d="M1.5 1 H13.5 V4.5 H12.6 L11.9 2.6 H8.3 V13.8 L9.8 14.5 V15.3 H5.2 V14.5 L6.7 13.8 V2.6 H3.1 L2.4 4.5 H1.5 Z" fill="#111"/></svg>
<svg style="left:58px;top:159px;" width="4" height="4" viewBox="0 0 4 4"><path d="M4 0 L4 4 L0 4 Z" fill="#111"/></svg>
<svg style="left:13px;top:167px;" width="18" height="20" viewBox="0 0 18 20"><path d="M2 2 L16 18" stroke="#111" stroke-width="1.5"/></svg>
<svg style="left:31px;top:181px;" width="4" height="4" viewBox="0 0 4 4"><path d="M4 0 L4 4 L0 4 Z" fill="#111"/></svg>
<div style="left:33px;top:162px;width:32px;height:26px;border:5px solid #ee0000;box-sizing:border-box;border-radius:2px;background:#cfcfcf"></div>
<svg style="left:39px;top:168px;" width="19" height="15" viewBox="0 0 19 15"><defs><linearGradient id="rg" x1="0" y1="0" x2="1" y2="1"><stop offset="0" stop-color="#fff"/><stop offset="1" stop-color="#999"/></linearGradient></defs><rect x="1.5" y="1.5" width="15" height="11" fill="url(#rg)" stroke="#111" stroke-width="1.3"/></svg>
<svg style="left:13px;top:188px;" width="20" height="18" viewBox="0 0 20 18"><path d="M18 1 L8 11" stroke="#333" stroke-width="2.2"/><path d="M9 9 C5 9, 3 12, 2 17 C6 16, 10 14, 11 11 Z" fill="#aaa" stroke="#222"/></svg>
<svg style="left:37px;top:188px;" width="20" height="18" viewBox="0 0 20 18"><path d="M16 1 L19 4 L7 16 L2 17 L3 12 Z" fill="#fff" stroke="#222" stroke-width="1.2"/><path d="M3 12 L7 16" stroke="#222"/></svg>
<svg style="left:57px;top:201px;" width="4" height="4" viewBox="0 0 4 4"><path d="M4 0 L4 4 L0 4 Z" fill="#111"/></svg>
<svg style="left:12px;top:208px;" width="22" height="18" viewBox="0 0 22 18"><path d="M2 8 L14 8 L14 17 L2 17 Z" fill="#fff" stroke="#111" stroke-width="1.5"/><path d="M6 12 C6 6, 12 3, 18 5 C16 11, 12 13, 6 12 Z" fill="#bbb" stroke="#222"/><path d="M14 6 L21 1" stroke="#333" stroke-width="1.5"/></svg>
<svg style="left:38px;top:210px;" width="18" height="14" viewBox="0 0 18 14"><path d="M1 11 L8 3 L17 3 L11 11 Z" fill="#fff" stroke="#222" stroke-width="1.2"/><path d="M1 11 L1 13 L11 13 L17 5 L17 3" fill="#bbb" stroke="#222"/></svg>
<svg style="left:57px;top:223px;" width="4" height="4" viewBox="0 0 4 4"><path d="M4 0 L4 4 L0 4 Z" fill="#111"/></svg>
<svg style="left:14px;top:234px;" width="17" height="18" viewBox="0 0 17 18"><path d="M4 4 A6.5 6.5 0 1 1 3 11" fill="none" stroke="#222" stroke-width="1.4" stroke-dasharray="1.4 1.4"/><path d="M1 5 L5 1 L6 6 Z" fill="#222"/></svg>
<svg style="left:31px;top:247px;" width="4" height="4" viewBox="0 0 4 4"><path d="M4 0 L4 4 L0 4 Z" fill="#111"/></svg>
<svg style="left:38px;top:234px;" width="19" height="17" viewBox="0 0 19 17"><rect x="1.5" y="1.5" width="11" height="9" fill="#f4f4f4" stroke="#222" stroke-width="1.2"/><rect x="8.5" y="7.5" width="8" height="7" fill="#ccc" stroke="#666"/><path d="M3 3 L9 8 M3 3 V6 M3 3 H6" stroke="#111" stroke-width="1.2"/></svg>
<svg style="left:57px;top:247px;" width="4" height="4" viewBox="0 0 4 4"><path d="M4 0 L4 4 L0 4 Z" fill="#111"/></svg>
<svg style="left:12px;top:256px;" width="20" height="18" viewBox="0 0 20 18"><path d="M1 12 C5 6, 9 14, 14 6 C16 3, 18 2, 19 1 L19 6 C16 9, 12 16, 8 13 C5 11, 3 13, 1 15 Z" fill="#888"/><path d="M6 3 L18 16" stroke="#222"/><circle cx="12" cy="10" r="1.8" fill="#fff" stroke="#222"/></svg>
<svg style="left:30px;top:269px;" width="4" height="4" viewBox="0 0 4 4"><path d="M4 0 L4 4 L0 4 Z" fill="#111"/></svg>
<svg style="left:38px;top:256px;" width="18" height="16" viewBox="0 0 18 16"><rect x="4.5" y="1.5" width="12" height="12" fill="none" stroke="#111" stroke-width="1.6" stroke-dasharray="2 2"/><path d="M1 1 L1 12 L9 8 Z" fill="#222"/></svg>
<svg style="left:12px;top:277px;" width="22" height="18" viewBox="0 0 22 18"><ellipse cx="8" cy="7" rx="7" ry="5.5" fill="#eee" stroke="#333" stroke-width="1.2"/><circle cx="5" cy="7" r="1" fill="#333"/><circle cx="8" cy="7" r="1" fill="#333"/><path d="M11 8 L11 17 L13 15 L15 18 L16.5 17.5 L15 14.5 L18 14 Z" fill="#fff" stroke="#222"/></svg>
<svg style="left:30px;top:291px;" width="4" height="4" viewBox="0 0 4 4"><path d="M4 0 L4 4 L0 4 Z" fill="#111"/></svg>
<svg style="left:38px;top:276px;" width="19" height="18" viewBox="0 0 19 18"><path d="M2 1 L2 15 L17 15 M2 1 L10 3 L10 14 M2 6 L10 7 M2 11 L10 11 M6 2 V15 M10 3 L17 8" fill="none" stroke="#333" stroke-width="1.1"/></svg>
<svg style="left:57px;top:291px;" width="4" height="4" viewBox="0 0 4 4"><path d="M4 0 L4 4 L0 4 Z" fill="#111"/></svg>
<svg style="left:13px;top:301px;" width="18" height="15" viewBox="0 0 18 15"><rect x="1.5" y="1.5" width="15" height="12" fill="#eee" stroke="#111" stroke-width="1.3"/><path d="M1.5 7 C6 3, 11 3, 16.5 7 M9 1.5 V13.5 M4 13.5 C6 9, 12 9, 14 13.5" fill="none" stroke="#555"/></svg>
<svg style="left:38px;top:301px;" width="18" height="15" viewBox="0 0 18 15"><defs><linearGradient id="gg"><stop offset="0" stop-color="#fff"/><stop offset="1" stop-color="#111"/></linearGradient></defs><rect x="1.5" y="1.5" width="15" height="12" fill="url(#gg)" stroke="#222"/></svg>
<svg style="left:13px;top:321px;" width="17" height="17" viewBox="0 0 17 17"><path d="M2 15 L11 6" stroke="#222" stroke-width="2.5"/><path d="M2.5 14.5 L10 7" stroke="#fff" stroke-width="1"/><path d="M10 4 L13 1 L16 4 L13 7 Z" fill="#222"/></svg>
<svg style="left:30px;top:334px;" width="4" height="4" viewBox="0 0 4 4"><path d="M4 0 L4 4 L0 4 Z" fill="#111"/></svg>
<svg style="left:38px;top:321px;" width="18" height="17" viewBox="0 0 18 17"><rect x="1.5" y="1.5" width="6" height="6" fill="#fff" stroke="#333"/><circle cx="12" cy="12" r="4" fill="#ddd" stroke="#333"/><path d="M7 9 L9 11 M9 8 L10 9 M5 10 L7 12" stroke="#777" stroke-dasharray="1 1"/></svg>
<svg style="left:13px;top:346px;" width="18" height="17" viewBox="0 0 18 17"><rect x="5.5" y="5.5" width="9" height="11" rx="1" fill="#eee" stroke="#222"/><circle cx="10" cy="11" r="2.5" fill="none" stroke="#222"/><rect x="7.5" y="2.5" width="5" height="3" fill="#ccc" stroke="#222"/><path d="M1 2 H3 M1 4 H3 M3 1 V2" stroke="#555"/></svg>
<svg style="left:30px;top:359px;" width="4" height="4" viewBox="0 0 4 4"><path d="M4 0 L4 4 L0 4 Z" fill="#111"/></svg>
<svg style="left:38px;top:346px;" width="18" height="17" viewBox="0 0 18 17"><path d="M1.5 1 V15.5 H17" fill="none" stroke="#222"/><rect x="4" y="9" width="3" height="6" fill="#666"/><rect x="8" y="5" width="3" height="10" fill="#666"/><rect x="12" y="7" width="3" height="8" fill="#666"/></svg>
<svg style="left:57px;top:359px;" width="4" height="4" viewBox="0 0 4 4"><path d="M4 0 L4 4 L0 4 Z" fill="#111"/></svg>
<svg style="left:14px;top:372px;" width="16" height="16" viewBox="0 0 16 16"><rect x="3.5" y="3.5" width="9" height="9" fill="none" stroke="#222" stroke-width="1.2"/><path d="M3.5 0 V2 M12.5 0 V2 M0 3.5 H2 M0 12.5 H2 M14 3.5 H16 M14 12.5 H16 M3.5 14 V16 M12.5 14 V16" stroke="#555"/></svg>
<svg style="left:38px;top:371px;" width="18" height="18" viewBox="0 0 18 18"><path d="M17 1 L7 11 L2 17 L10 12 Z" fill="#bbb" stroke="#222"/><path d="M10 6 L14 10" stroke="#222"/></svg>
<svg style="left:56px;top:384px;" width="4" height="4" viewBox="0 0 4 4"><path d="M4 0 L4 4 L0 4 Z" fill="#111"/></svg>
<svg style="left:13px;top:392px;" width="18" height="18" viewBox="0 0 18 18"><path d="M4 9 V4 C4 3, 6 3, 6 4 V8 V2.5 C6 1.5, 8 1.5, 8 2.5 V8 V3 C8 2, 10 2, 10 3 V8 V4.5 C10 3.5, 12 3.5, 12 4.5 V11 C12 15, 10 17, 7 17 C4 17, 2 14, 1 11 C0.5 9.5, 2 9, 3 10 Z" fill="#fff" stroke="#222"/></svg>
<svg style="left:31px;top:405px;" width="4" height="4" viewBox="0 0 4 4"><path d="M4 0 L4 4 L0 4 Z" fill="#111"/></svg>
<svg style="left:38px;top:392px;" width="18" height="18" viewBox="0 0 18 18"><circle cx="7" cy="7" r="5" fill="#eee" stroke="#222" stroke-width="1.5"/><path d="M11 11 L16 16" stroke="#222" stroke-width="2.5"/></svg>
<svg style="left:13px;top:416px;" width="18" height="18" viewBox="0 0 18 18"><path d="M15 2 L17 4 L6 15 L2 16 L3 12 Z" fill="#fff" stroke="#222" stroke-width="1.2"/></svg>
<div style="left:6px;top:437px;width:57px;height:57px;border:5px solid #ee0000;box-sizing:border-box;border-radius:3px;background:#d0d0d0"></div>
<div style="left:27px;top:458px;width:30px;height:30px;background:#fff;border:1px solid #111;box-sizing:border-box"></div>
<svg style="left:27px;top:458px;" width="30" height="30" viewBox="0 0 30 30"><rect x="9.5" y="9.5" width="10" height="10" fill="none" stroke="#111"/><path d="M1.5 28.5 L28.5 1.5" stroke="#b0103a" stroke-width="2.5"/></svg>
<div style="left:13px;top:444px;width:30px;height:29px;background:#a9be2b;border:1px solid #111;box-shadow:inset 0 0 0 1px #fff;box-sizing:border-box"></div>
<svg style="left:46px;top:443px;" width="11" height="11" viewBox="0 0 11 11"><path d="M2 4 C2 2, 4 1, 7 1 M5 -1 L7.5 1 L5 3" fill="none" stroke="#333" stroke-width="1.1"/><path d="M9 7 C9 9, 7 10, 4 10 M6 12 L3.5 10 L6 8" fill="none" stroke="#333" stroke-width="1.1"/></svg>
<svg style="left:13px;top:475px;" width="12" height="11" viewBox="0 0 12 11"><rect x="4.5" y="4.5" width="6" height="6" fill="#111"/><rect x="1.5" y="1.5" width="6" height="6" fill="#fff" stroke="#222"/></svg>
<div style="left:9px;top:496px;width:16px;height:13px;background:#a9be2b;border:1px solid #555;box-shadow:inset 0 0 0 1px #ccc;border-radius:2px;box-sizing:border-box"></div>
<div style="left:8px;top:495px;width:18px;height:15px;border:1px solid #888;border-radius:3px;box-sizing:border-box"></div>
<svg style="left:29px;top:497px;" width="10" height="11" viewBox="0 0 10 11"><defs><linearGradient id="g2"><stop offset="0" stop-color="#fff"/><stop offset="1" stop-color="#666"/></linearGradient></defs><rect x="0.5" y="0.5" width="9" height="10" fill="url(#g2)" stroke="#999"/></svg>
<svg style="left:47px;top:497px;" width="10" height="11" viewBox="0 0 10 11"><rect x="0.5" y="0.5" width="9" height="10" fill="#fff" stroke="#bbb"/><path d="M0.5 10.5 L9.5 0.5" stroke="#b0103a" stroke-width="1.6"/></svg>
<div style="left:9px;top:515px;width:17px;height:16px;background:#a8a8a8;border:1px solid #555;border-radius:3px;box-sizing:border-box"></div>
<svg style="left:10px;top:516px;" width="16" height="14" viewBox="0 0 16 14"><circle cx="6" cy="6" r="4.5" fill="#eee" stroke="#222"/><rect x="7.5" y="7.5" width="6" height="5" fill="#555" stroke="#222"/></svg>
<svg style="left:28px;top:516px;" width="14" height="14" viewBox="0 0 14 14"><circle cx="6" cy="6" r="4.5" fill="#eee" stroke="#222"/><rect x="7.5" y="7.5" width="5" height="5" fill="#555" stroke="#222"/></svg>
<svg style="left:45px;top:516px;" width="12" height="12" viewBox="0 0 12 12"><circle cx="6" cy="6" r="4.5" fill="#eee" stroke="#222"/><path d="M6 6 H10.5 A4.5 4.5 0 0 1 6 10.5 Z" fill="#555"/></svg>
<svg style="left:22px;top:537px;" width="24" height="17" viewBox="0 0 24 17"><rect x="1.5" y="6.5" width="12" height="9" fill="#fff" stroke="#888"/><rect x="8.5" y="1.5" width="13" height="10" fill="#f0f0f0" stroke="#888"/><rect x="9" y="2" width="12" height="3" fill="#ccc"/></svg>
<div style="left:65px;top:89px;width:1620px;height:15px;background:#fff"></div>
<div style="left:65px;top:104px;width:1620px;height:1px;background:#111"></div>
<div style="left:65px;top:105px;width:15px;height:915px;background:#fff"></div>
<div style="left:80px;top:89px;width:1px;height:931px;background:#111"></div>
<div style="left:64px;top:89px;width:1px;height:931px;background:#222"></div>
<svg style="left:0;top:0" width="1920" height="1040" viewBox="0 0 1920 1040"><rect x="86" y="101" width="1" height="3" fill="#111"/><rect x="92" y="101" width="1" height="3" fill="#111"/><rect x="98" y="101" width="1" height="3" fill="#111"/><rect x="104" y="89" width="1" height="15" fill="#111"/><rect x="110" y="101" width="1" height="3" fill="#111"/><rect x="115" y="101" width="1" height="3" fill="#111"/><rect x="121" y="101" width="1" height="3" fill="#111"/><rect x="127" y="101" width="1" height="3" fill="#111"/><rect x="133" y="98" width="1" height="6" fill="#111"/><rect x="139" y="101" width="1" height="3" fill="#111"/><rect x="145" y="101" width="1" height="3" fill="#111"/><rect x="151" y="101" width="1" height="3" fill="#111"/><rect x="156" y="101" width="1" height="3" fill="#111"/><rect x="162" y="89" width="1" height="15" fill="#111"/><rect x="168" y="101" width="1" height="3" fill="#111"/><rect x="174" y="101" width="1" height="3" fill="#111"/><rect x="180" y="101" width="1" height="3" fill="#111"/><rect x="186" y="101" width="1" height="3" fill="#111"/><rect x="192" y="98" width="1" height="6" fill="#111"/><rect x="198" y="101" width="1" height="3" fill="#111"/><rect x="203" y="101" width="1" height="3" fill="#111"/><rect x="209" y="101" width="1" height="3" fill="#111"/><rect x="215" y="101" width="1" height="3" fill="#111"/><rect x="221" y="89" width="1" height="15" fill="#111"/><rect x="227" y="101" width="1" height="3" fill="#111"/><rect x="233" y="101" width="1" height="3" fill="#111"/><rect x="239" y="101" width="1" height="3" fill="#111"/><rect x="244" y="101" width="1" height="3" fill="#111"/><rect x="250" y="98" width="1" height="6" fill="#111"/><rect x="256" y="101" width="1" height="3" fill="#111"/><rect x="262" y="101" width="1" height="3" fill="#111"/><rect x="268" y="101" width="1" height="3" fill="#111"/><rect x="274" y="101" width="1" height="3" fill="#111"/><rect x="280" y="89" width="1" height="15" fill="#111"/><rect x="286" y="101" width="1" height="3" fill="#111"/><rect x="291" y="101" width="1" height="3" fill="#111"/><rect x="297" y="101" width="1" height="3" fill="#111"/><rect x="303" y="101" width="1" height="3" fill="#111"/><rect x="309" y="98" width="1" height="6" fill="#111"/><rect x="315" y="101" width="1" height="3" fill="#111"/><rect x="321" y="101" width="1" height="3" fill="#111"/><rect x="327" y="101" width="1" height="3" fill="#111"/><rect x="332" y="101" width="1" height="3" fill="#111"/><rect x="338" y="89" width="1" height="15" fill="#111"/><rect x="344" y="101" width="1" height="3" fill="#111"/><rect x="350" y="101" width="1" height="3" fill="#111"/><rect x="356" y="101" width="1" height="3" fill="#111"/><rect x="362" y="101" width="1" height="3" fill="#111"/><rect x="368" y="98" width="1" height="6" fill="#111"/><rect x="374" y="101" width="1" height="3" fill="#111"/><rect x="379" y="101" width="1" height="3" fill="#111"/><rect x="385" y="101" width="1" height="3" fill="#111"/><rect x="391" y="101" width="1" height="3" fill="#111"/><rect x="397" y="89" width="1" height="15" fill="#111"/><rect x="403" y="101" width="1" height="3" fill="#111"/><rect x="409" y="101" width="1" height="3" fill="#111"/><rect x="415" y="101" width="1" height="3" fill="#111"/><rect x="420" y="101" width="1" height="3" fill="#111"/><rect x="426" y="98" width="1" height="6" fill="#111"/><rect x="432" y="101" width="1" height="3" fill="#111"/><rect x="438" y="101" width="1" height="3" fill="#111"/><rect x="444" y="101" width="1" height="3" fill="#111"/><rect x="450" y="101" width="1" height="3" fill="#111"/><rect x="456" y="89" width="1" height="15" fill="#111"/><rect x="462" y="101" width="1" height="3" fill="#111"/><rect x="467" y="101" width="1" height="3" fill="#111"/><rect x="473" y="101" width="1" height="3" fill="#111"/><rect x="479" y="101" width="1" height="3" fill="#111"/><rect x="485" y="98" width="1" height="6" fill="#111"/><rect x="491" y="101" width="1" height="3" fill="#111"/><rect x="497" y="101" width="1" height="3" fill="#111"/><rect x="503" y="101" width="1" height="3" fill="#111"/><rect x="508" y="101" width="1" height="3" fill="#111"/><rect x="514" y="89" width="1" height="15" fill="#111"/><rect x="520" y="101" width="1" height="3" fill="#111"/><rect x="526" y="101" width="1" height="3" fill="#111"/><rect x="532" y="101" width="1" height="3" fill="#111"/><rect x="538" y="101" width="1" height="3" fill="#111"/><rect x="544" y="98" width="1" height="6" fill="#111"/><rect x="550" y="101" width="1" height="3" fill="#111"/><rect x="555" y="101" width="1" height="3" fill="#111"/><rect x="561" y="101" width="1" height="3" fill="#111"/><rect x="567" y="101" width="1" height="3" fill="#111"/><rect x="573" y="89" width="1" height="15" fill="#111"/><rect x="579" y="101" width="1" height="3" fill="#111"/><rect x="585" y="101" width="1" height="3" fill="#111"/><rect x="591" y="101" width="1" height="3" fill="#111"/><rect x="596" y="101" width="1" height="3" fill="#111"/><rect x="602" y="98" width="1" height="6" fill="#111"/><rect x="608" y="101" width="1" height="3" fill="#111"/><rect x="614" y="101" width="1" height="3" fill="#111"/><rect x="620" y="101" width="1" height="3" fill="#111"/><rect x="626" y="101" width="1" height="3" fill="#111"/><rect x="632" y="89" width="1" height="15" fill="#111"/><rect x="638" y="101" width="1" height="3" fill="#111"/><rect x="643" y="101" width="1" height="3" fill="#111"/><rect x="649" y="101" width="1" height="3" fill="#111"/><rect x="655" y="101" width="1" height="3" fill="#111"/><rect x="661" y="98" width="1" height="6" fill="#111"/><rect x="667" y="101" width="1" height="3" fill="#111"/><rect x="673" y="101" width="1" height="3" fill="#111"/><rect x="679" y="101" width="1" height="3" fill="#111"/><rect x="684" y="101" width="1" height="3" fill="#111"/><rect x="690" y="89" width="1" height="15" fill="#111"/><rect x="696" y="101" width="1" height="3" fill="#111"/><rect x="702" y="101" width="1" height="3" fill="#111"/><rect x="708" y="101" width="1" height="3" fill="#111"/><rect x="714" y="101" width="1" height="3" fill="#111"/><rect x="720" y="98" width="1" height="6" fill="#111"/><rect x="726" y="101" width="1" height="3" fill="#111"/><rect x="731" y="101" width="1" height="3" fill="#111"/><rect x="737" y="101" width="1" height="3" fill="#111"/><rect x="743" y="101" width="1" height="3" fill="#111"/><rect x="749" y="89" width="1" height="15" fill="#111"/><rect x="755" y="101" width="1" height="3" fill="#111"/><rect x="761" y="101" width="1" height="3" fill="#111"/><rect x="767" y="101" width="1" height="3" fill="#111"/><rect x="772" y="101" width="1" height="3" fill="#111"/><rect x="778" y="98" width="1" height="6" fill="#111"/><rect x="784" y="101" width="1" height="3" fill="#111"/><rect x="790" y="101" width="1" height="3" fill="#111"/><rect x="796" y="101" width="1" height="3" fill="#111"/><rect x="802" y="101" width="1" height="3" fill="#111"/><rect x="808" y="89" width="1" height="15" fill="#111"/><rect x="814" y="101" width="1" height="3" fill="#111"/><rect x="819" y="101" width="1" height="3" fill="#111"/><rect x="825" y="101" width="1" height="3" fill="#111"/><rect x="831" y="101" width="1" height="3" fill="#111"/><rect x="837" y="98" width="1" height="6" fill="#111"/><rect x="843" y="101" width="1" height="3" fill="#111"/><rect x="849" y="101" width="1" height="3" fill="#111"/><rect x="855" y="101" width="1" height="3" fill="#111"/><rect x="860" y="101" width="1" height="3" fill="#111"/><rect x="866" y="89" width="1" height="15" fill="#111"/><rect x="872" y="101" width="1" height="3" fill="#111"/><rect x="878" y="101" width="1" height="3" fill="#111"/><rect x="884" y="101" width="1" height="3" fill="#111"/><rect x="890" y="101" width="1" height="3" fill="#111"/><rect x="896" y="98" width="1" height="6" fill="#111"/><rect x="902" y="101" width="1" height="3" fill="#111"/><rect x="907" y="101" width="1" height="3" fill="#111"/><rect x="913" y="101" width="1" height="3" fill="#111"/><rect x="919" y="101" width="1" height="3" fill="#111"/><rect x="925" y="89" width="1" height="15" fill="#111"/><rect x="931" y="101" width="1" height="3" fill="#111"/><rect x="937" y="101" width="1" height="3" fill="#111"/><rect x="943" y="101" width="1" height="3" fill="#111"/><rect x="948" y="101" width="1" height="3" fill="#111"/><rect x="954" y="98" width="1" height="6" fill="#111"/><rect x="960" y="101" width="1" height="3" fill="#111"/><rect x="966" y="101" width="1" height="3" fill="#111"/><rect x="972" y="101" width="1" height="3" fill="#111"/><rect x="978" y="101" width="1" height="3" fill="#111"/><rect x="984" y="89" width="1" height="15" fill="#111"/><rect x="990" y="101" width="1" height="3" fill="#111"/><rect x="995" y="101" width="1" height="3" fill="#111"/><rect x="1001" y="101" width="1" height="3" fill="#111"/><rect x="1007" y="101" width="1" height="3" fill="#111"/><rect x="1013" y="98" width="1" height="6" fill="#111"/><rect x="1019" y="101" width="1" height="3" fill="#111"/><rect x="1025" y="101" width="1" height="3" fill="#111"/><rect x="1031" y="101" width="1" height="3" fill="#111"/><rect x="1036" y="101" width="1" height="3" fill="#111"/><rect x="1042" y="89" width="1" height="15" fill="#111"/><rect x="1048" y="101" width="1" height="3" fill="#111"/><rect x="1054" y="101" width="1" height="3" fill="#111"/><rect x="1060" y="101" width="1" height="3" fill="#111"/><rect x="1066" y="101" width="1" height="3" fill="#111"/><rect x="1072" y="98" width="1" height="6" fill="#111"/><rect x="1078" y="101" width="1" height="3" fill="#111"/><rect x="1083" y="101" width="1" height="3" fill="#111"/><rect x="1089" y="101" width="1" height="3" fill="#111"/><rect x="1095" y="101" width="1" height="3" fill="#111"/><rect x="1101" y="89" width="1" height="15" fill="#111"/><rect x="1107" y="101" width="1" height="3" fill="#111"/><rect x="1113" y="101" width="1" height="3" fill="#111"/><rect x="1119" y="101" width="1" height="3" fill="#111"/><rect x="1124" y="101" width="1" height="3" fill="#111"/><rect x="1130" y="98" width="1" height="6" fill="#111"/><rect x="1136" y="101" width="1" height="3" fill="#111"/><rect x="1142" y="101" width="1" height="3" fill="#111"/><rect x="1148" y="101" width="1" height="3" fill="#111"/><rect x="1154" y="101" width="1" height="3" fill="#111"/><rect x="1160" y="89" width="1" height="15" fill="#111"/><rect x="1166" y="101" width="1" height="3" fill="#111"/><rect x="1171" y="101" width="1" height="3" fill="#111"/><rect x="1177" y="101" width="1" height="3" fill="#111"/><rect x="1183" y="101" width="1" height="3" fill="#111"/><rect x="1189" y="98" width="1" height="6" fill="#111"/><rect x="1195" y="101" width="1" height="3" fill="#111"/><rect x="1201" y="101" width="1" height="3" fill="#111"/><rect x="1207" y="101" width="1" height="3" fill="#111"/><rect x="1212" y="101" width="1" height="3" fill="#111"/><rect x="1218" y="89" width="1" height="15" fill="#111"/><rect x="1224" y="101" width="1" height="3" fill="#111"/><rect x="1230" y="101" width="1" height="3" fill="#111"/><rect x="1236" y="101" width="1" height="3" fill="#111"/><rect x="1242" y="101" width="1" height="3" fill="#111"/><rect x="1248" y="98" width="1" height="6" fill="#111"/><rect x="1254" y="101" width="1" height="3" fill="#111"/><rect x="1259" y="101" width="1" height="3" fill="#111"/><rect x="1265" y="101" width="1" height="3" fill="#111"/><rect x="1271" y="101" width="1" height="3" fill="#111"/><rect x="1277" y="89" width="1" height="15" fill="#111"/><rect x="1283" y="101" width="1" height="3" fill="#111"/><rect x="1289" y="101" width="1" height="3" fill="#111"/><rect x="1295" y="101" width="1" height="3" fill="#111"/><rect x="1300" y="101" width="1" height="3" fill="#111"/><rect x="1306" y="98" width="1" height="6" fill="#111"/><rect x="1312" y="101" width="1" height="3" fill="#111"/><rect x="1318" y="101" width="1" height="3" fill="#111"/><rect x="1324" y="101" width="1" height="3" fill="#111"/><rect x="1330" y="101" width="1" height="3" fill="#111"/><rect x="1336" y="89" width="1" height="15" fill="#111"/><rect x="1342" y="101" width="1" height="3" fill="#111"/><rect x="1347" y="101" width="1" height="3" fill="#111"/><rect x="1353" y="101" width="1" height="3" fill="#111"/><rect x="1359" y="101" width="1" height="3" fill="#111"/><rect x="1365" y="98" width="1" height="6" fill="#111"/><rect x="1371" y="101" width="1" height="3" fill="#111"/><rect x="1377" y="101" width="1" height="3" fill="#111"/><rect x="1383" y="101" width="1" height="3" fill="#111"/><rect x="1388" y="101" width="1" height="3" fill="#111"/><rect x="1394" y="89" width="1" height="15" fill="#111"/><rect x="1400" y="101" width="1" height="3" fill="#111"/><rect x="1406" y="101" width="1" height="3" fill="#111"/><rect x="1412" y="101" width="1" height="3" fill="#111"/><rect x="1418" y="101" width="1" height="3" fill="#111"/><rect x="1424" y="98" width="1" height="6" fill="#111"/><rect x="1430" y="101" width="1" height="3" fill="#111"/><rect x="1435" y="101" width="1" height="3" fill="#111"/><rect x="1441" y="101" width="1" height="3" fill="#111"/><rect x="1447" y="101" width="1" height="3" fill="#111"/><rect x="1453" y="89" width="1" height="15" fill="#111"/><rect x="1459" y="101" width="1" height="3" fill="#111"/><rect x="1465" y="101" width="1" height="3" fill="#111"/><rect x="1471" y="101" width="1" height="3" fill="#111"/><rect x="1476" y="101" width="1" height="3" fill="#111"/><rect x="1482" y="98" width="1" height="6" fill="#111"/><rect x="1488" y="101" width="1" height="3" fill="#111"/><rect x="1494" y="101" width="1" height="3" fill="#111"/><rect x="1500" y="101" width="1" height="3" fill="#111"/><rect x="1506" y="101" width="1" height="3" fill="#111"/><rect x="1512" y="89" width="1" height="15" fill="#111"/><rect x="1518" y="101" width="1" height="3" fill="#111"/><rect x="1523" y="101" width="1" height="3" fill="#111"/><rect x="1529" y="101" width="1" height="3" fill="#111"/><rect x="1535" y="101" width="1" height="3" fill="#111"/><rect x="1541" y="98" width="1" height="6" fill="#111"/><rect x="1547" y="101" width="1" height="3" fill="#111"/><rect x="1553" y="101" width="1" height="3" fill="#111"/><rect x="1559" y="101" width="1" height="3" fill="#111"/><rect x="1564" y="101" width="1" height="3" fill="#111"/><rect x="1570" y="89" width="1" height="15" fill="#111"/><rect x="1576" y="101" width="1" height="3" fill="#111"/><rect x="1582" y="101" width="1" height="3" fill="#111"/><rect x="1588" y="101" width="1" height="3" fill="#111"/><rect x="1594" y="101" width="1" height="3" fill="#111"/><rect x="1600" y="98" width="1" height="6" fill="#111"/><rect x="1606" y="101" width="1" height="3" fill="#111"/><rect x="1611" y="101" width="1" height="3" fill="#111"/><rect x="1617" y="101" width="1" height="3" fill="#111"/><rect x="1623" y="101" width="1" height="3" fill="#111"/><rect x="1629" y="89" width="1" height="15" fill="#111"/><rect x="1635" y="101" width="1" height="3" fill="#111"/><rect x="1641" y="101" width="1" height="3" fill="#111"/><rect x="1647" y="101" width="1" height="3" fill="#111"/><rect x="1652" y="101" width="1" height="3" fill="#111"/><rect x="1658" y="98" width="1" height="6" fill="#111"/><rect x="1664" y="101" width="1" height="3" fill="#111"/><rect x="1670" y="101" width="1" height="3" fill="#111"/><rect x="1676" y="101" width="1" height="3" fill="#111"/><rect x="1682" y="101" width="1" height="3" fill="#111"/></svg>
<span style="left:107.5px;top:90.42px;font-size:9.9px;line-height:9.9px;color:#111;font-weight:400;letter-spacing:-0.8px;-webkit-text-stroke:0.2px #111;font-family:'Liberation Sans'">80</span>
<span style="left:165.5px;top:90.42px;font-size:9.9px;line-height:9.9px;color:#111;font-weight:400;letter-spacing:-0.8px;-webkit-text-stroke:0.2px #111;font-family:'Liberation Sans'">70</span>
<span style="left:224.5px;top:90.42px;font-size:9.9px;line-height:9.9px;color:#111;font-weight:400;letter-spacing:-0.8px;-webkit-text-stroke:0.2px #111;font-family:'Liberation Sans'">60</span>
<span style="left:283.5px;top:90.42px;font-size:9.9px;line-height:9.9px;color:#111;font-weight:400;letter-spacing:-0.8px;-webkit-text-stroke:0.2px #111;font-family:'Liberation Sans'">50</span>
<span style="left:341.5px;top:90.42px;font-size:9.9px;line-height:9.9px;color:#111;font-weight:400;letter-spacing:-0.8px;-webkit-text-stroke:0.2px #111;font-family:'Liberation Sans'">40</span>
<span style="left:400.5px;top:90.42px;font-size:9.9px;line-height:9.9px;color:#111;font-weight:400;letter-spacing:-0.8px;-webkit-text-stroke:0.2px #111;font-family:'Liberation Sans'">30</span>
<span style="left:459.5px;top:90.42px;font-size:9.9px;line-height:9.9px;color:#111;font-weight:400;letter-spacing:-0.8px;-webkit-text-stroke:0.2px #111;font-family:'Liberation Sans'">20</span>
<span style="left:517.5px;top:90.42px;font-size:9.9px;line-height:9.9px;color:#111;font-weight:400;letter-spacing:-0.8px;-webkit-text-stroke:0.2px #111;font-family:'Liberation Sans'">10</span>
<span style="left:576.5px;top:90.42px;font-size:9.9px;line-height:9.9px;color:#111;font-weight:400;letter-spacing:-0.8px;-webkit-text-stroke:0.2px #111;font-family:'Liberation Sans'">0</span>
<span style="left:635.5px;top:90.42px;font-size:9.9px;line-height:9.9px;color:#111;font-weight:400;letter-spacing:-0.8px;-webkit-text-stroke:0.2px #111;font-family:'Liberation Sans'">10</span>
<span style="left:693.5px;top:90.42px;font-size:9.9px;line-height:9.9px;color:#111;font-weight:400;letter-spacing:-0.8px;-webkit-text-stroke:0.2px #111;font-family:'Liberation Sans'">20</span>
<span style="left:752.5px;top:90.42px;font-size:9.9px;line-height:9.9px;color:#111;font-weight:400;letter-spacing:-0.8px;-webkit-text-stroke:0.2px #111;font-family:'Liberation Sans'">30</span>
<span style="left:811.5px;top:90.42px;font-size:9.9px;line-height:9.9px;color:#111;font-weight:400;letter-spacing:-0.8px;-webkit-text-stroke:0.2px #111;font-family:'Liberation Sans'">40</span>
<span style="left:869.5px;top:90.42px;font-size:9.9px;line-height:9.9px;color:#111;font-weight:400;letter-spacing:-0.8px;-webkit-text-stroke:0.2px #111;font-family:'Liberation Sans'">50</span>
<span style="left:928.5px;top:90.42px;font-size:9.9px;line-height:9.9px;color:#111;font-weight:400;letter-spacing:-0.8px;-webkit-text-stroke:0.2px #111;font-family:'Liberation Sans'">60</span>
<span style="left:987.5px;top:90.42px;font-size:9.9px;line-height:9.9px;color:#111;font-weight:400;letter-spacing:-0.8px;-webkit-text-stroke:0.2px #111;font-family:'Liberation Sans'">70</span>
<span style="left:1045.5px;top:90.42px;font-size:9.9px;line-height:9.9px;color:#111;font-weight:400;letter-spacing:-0.8px;-webkit-text-stroke:0.2px #111;font-family:'Liberation Sans'">80</span>
<span style="left:1104.5px;top:90.42px;font-size:9.9px;line-height:9.9px;color:#111;font-weight:400;letter-spacing:-0.8px;-webkit-text-stroke:0.2px #111;font-family:'Liberation Sans'">90</span>
<span style="left:1163.5px;top:90.42px;font-size:9.9px;line-height:9.9px;color:#111;font-weight:400;letter-spacing:-0.8px;-webkit-text-stroke:0.2px #111;font-family:'Liberation Sans'">100</span>
<span style="left:1221.5px;top:90.42px;font-size:9.9px;line-height:9.9px;color:#111;font-weight:400;letter-spacing:-0.8px;-webkit-text-stroke:0.2px #111;font-family:'Liberation Sans'">110</span>
<span style="left:1280.5px;top:90.42px;font-size:9.9px;line-height:9.9px;color:#111;font-weight:400;letter-spacing:-0.8px;-webkit-text-stroke:0.2px #111;font-family:'Liberation Sans'">120</span>
<span style="left:1339.5px;top:90.42px;font-size:9.9px;line-height:9.9px;color:#111;font-weight:400;letter-spacing:-0.8px;-webkit-text-stroke:0.2px #111;font-family:'Liberation Sans'">130</span>
<span style="left:1397.5px;top:90.42px;font-size:9.9px;line-height:9.9px;color:#111;font-weight:400;letter-spacing:-0.8px;-webkit-text-stroke:0.2px #111;font-family:'Liberation Sans'">140</span>
<span style="left:1456.5px;top:90.42px;font-size:9.9px;line-height:9.9px;color:#111;font-weight:400;letter-spacing:-0.8px;-webkit-text-stroke:0.2px #111;font-family:'Liberation Sans'">150</span>
<span style="left:1515.5px;top:90.42px;font-size:9.9px;line-height:9.9px;color:#111;font-weight:400;letter-spacing:-0.8px;-webkit-text-stroke:0.2px #111;font-family:'Liberation Sans'">160</span>
<span style="left:1573.5px;top:90.42px;font-size:9.9px;line-height:9.9px;color:#111;font-weight:400;letter-spacing:-0.8px;-webkit-text-stroke:0.2px #111;font-family:'Liberation Sans'">170</span>
<span style="left:1632.5px;top:90.42px;font-size:9.9px;line-height:9.9px;color:#111;font-weight:400;letter-spacing:-0.8px;-webkit-text-stroke:0.2px #111;font-family:'Liberation Sans'">180</span>
<div style="left:1203px;top:89px;width:1px;height:15px;background:repeating-linear-gradient(#222 0 1px,transparent 1px 2px)"></div>
<svg style="left:0;top:0" width="1920" height="1040" viewBox="0 0 1920 1040"><rect x="77" y="110" width="3" height="1" fill="#111"/><rect x="77" y="116" width="3" height="1" fill="#111"/><rect x="77" y="121" width="3" height="1" fill="#111"/><rect x="65" y="127" width="15" height="1" fill="#111"/><rect x="77" y="133" width="3" height="1" fill="#111"/><rect x="77" y="139" width="3" height="1" fill="#111"/><rect x="77" y="145" width="3" height="1" fill="#111"/><rect x="77" y="151" width="3" height="1" fill="#111"/><rect x="74" y="157" width="6" height="1" fill="#111"/><rect x="77" y="163" width="3" height="1" fill="#111"/><rect x="77" y="168" width="3" height="1" fill="#111"/><rect x="77" y="174" width="3" height="1" fill="#111"/><rect x="77" y="180" width="3" height="1" fill="#111"/><rect x="65" y="186" width="15" height="1" fill="#111"/><rect x="77" y="192" width="3" height="1" fill="#111"/><rect x="77" y="198" width="3" height="1" fill="#111"/><rect x="77" y="204" width="3" height="1" fill="#111"/><rect x="77" y="209" width="3" height="1" fill="#111"/><rect x="74" y="215" width="6" height="1" fill="#111"/><rect x="77" y="221" width="3" height="1" fill="#111"/><rect x="77" y="227" width="3" height="1" fill="#111"/><rect x="77" y="233" width="3" height="1" fill="#111"/><rect x="77" y="239" width="3" height="1" fill="#111"/><rect x="65" y="245" width="15" height="1" fill="#111"/><rect x="77" y="251" width="3" height="1" fill="#111"/><rect x="77" y="256" width="3" height="1" fill="#111"/><rect x="77" y="262" width="3" height="1" fill="#111"/><rect x="77" y="268" width="3" height="1" fill="#111"/><rect x="74" y="274" width="6" height="1" fill="#111"/><rect x="77" y="280" width="3" height="1" fill="#111"/><rect x="77" y="286" width="3" height="1" fill="#111"/><rect x="77" y="292" width="3" height="1" fill="#111"/><rect x="77" y="297" width="3" height="1" fill="#111"/><rect x="65" y="303" width="15" height="1" fill="#111"/><rect x="77" y="309" width="3" height="1" fill="#111"/><rect x="77" y="315" width="3" height="1" fill="#111"/><rect x="77" y="321" width="3" height="1" fill="#111"/><rect x="77" y="327" width="3" height="1" fill="#111"/><rect x="74" y="333" width="6" height="1" fill="#111"/><rect x="77" y="339" width="3" height="1" fill="#111"/><rect x="77" y="344" width="3" height="1" fill="#111"/><rect x="77" y="350" width="3" height="1" fill="#111"/><rect x="77" y="356" width="3" height="1" fill="#111"/><rect x="65" y="362" width="15" height="1" fill="#111"/><rect x="77" y="368" width="3" height="1" fill="#111"/><rect x="77" y="374" width="3" height="1" fill="#111"/><rect x="77" y="380" width="3" height="1" fill="#111"/><rect x="77" y="385" width="3" height="1" fill="#111"/><rect x="74" y="391" width="6" height="1" fill="#111"/><rect x="77" y="397" width="3" height="1" fill="#111"/><rect x="77" y="403" width="3" height="1" fill="#111"/><rect x="77" y="409" width="3" height="1" fill="#111"/><rect x="77" y="415" width="3" height="1" fill="#111"/><rect x="65" y="421" width="15" height="1" fill="#111"/><rect x="77" y="427" width="3" height="1" fill="#111"/><rect x="77" y="432" width="3" height="1" fill="#111"/><rect x="77" y="438" width="3" height="1" fill="#111"/><rect x="77" y="444" width="3" height="1" fill="#111"/><rect x="74" y="450" width="6" height="1" fill="#111"/><rect x="77" y="456" width="3" height="1" fill="#111"/><rect x="77" y="462" width="3" height="1" fill="#111"/><rect x="77" y="468" width="3" height="1" fill="#111"/><rect x="77" y="473" width="3" height="1" fill="#111"/><rect x="65" y="479" width="15" height="1" fill="#111"/><rect x="77" y="485" width="3" height="1" fill="#111"/><rect x="77" y="491" width="3" height="1" fill="#111"/><rect x="77" y="497" width="3" height="1" fill="#111"/><rect x="77" y="503" width="3" height="1" fill="#111"/><rect x="74" y="509" width="6" height="1" fill="#111"/><rect x="77" y="515" width="3" height="1" fill="#111"/><rect x="77" y="520" width="3" height="1" fill="#111"/><rect x="77" y="526" width="3" height="1" fill="#111"/><rect x="77" y="532" width="3" height="1" fill="#111"/><rect x="65" y="538" width="15" height="1" fill="#111"/><rect x="77" y="544" width="3" height="1" fill="#111"/><rect x="77" y="550" width="3" height="1" fill="#111"/><rect x="77" y="556" width="3" height="1" fill="#111"/><rect x="77" y="561" width="3" height="1" fill="#111"/><rect x="74" y="567" width="6" height="1" fill="#111"/><rect x="77" y="573" width="3" height="1" fill="#111"/><rect x="77" y="579" width="3" height="1" fill="#111"/><rect x="77" y="585" width="3" height="1" fill="#111"/><rect x="77" y="591" width="3" height="1" fill="#111"/><rect x="65" y="597" width="15" height="1" fill="#111"/><rect x="77" y="603" width="3" height="1" fill="#111"/><rect x="77" y="608" width="3" height="1" fill="#111"/><rect x="77" y="614" width="3" height="1" fill="#111"/><rect x="77" y="620" width="3" height="1" fill="#111"/><rect x="74" y="626" width="6" height="1" fill="#111"/><rect x="77" y="632" width="3" height="1" fill="#111"/><rect x="77" y="638" width="3" height="1" fill="#111"/><rect x="77" y="644" width="3" height="1" fill="#111"/><rect x="77" y="649" width="3" height="1" fill="#111"/><rect x="65" y="655" width="15" height="1" fill="#111"/><rect x="77" y="661" width="3" height="1" fill="#111"/><rect x="77" y="667" width="3" height="1" fill="#111"/><rect x="77" y="673" width="3" height="1" fill="#111"/><rect x="77" y="679" width="3" height="1" fill="#111"/><rect x="74" y="685" width="6" height="1" fill="#111"/><rect x="77" y="691" width="3" height="1" fill="#111"/><rect x="77" y="696" width="3" height="1" fill="#111"/><rect x="77" y="702" width="3" height="1" fill="#111"/><rect x="77" y="708" width="3" height="1" fill="#111"/><rect x="65" y="714" width="15" height="1" fill="#111"/><rect x="77" y="720" width="3" height="1" fill="#111"/><rect x="77" y="726" width="3" height="1" fill="#111"/><rect x="77" y="732" width="3" height="1" fill="#111"/><rect x="77" y="737" width="3" height="1" fill="#111"/><rect x="74" y="743" width="6" height="1" fill="#111"/><rect x="77" y="749" width="3" height="1" fill="#111"/><rect x="77" y="755" width="3" height="1" fill="#111"/><rect x="77" y="761" width="3" height="1" fill="#111"/><rect x="77" y="767" width="3" height="1" fill="#111"/><rect x="65" y="773" width="15" height="1" fill="#111"/><rect x="77" y="779" width="3" height="1" fill="#111"/><rect x="77" y="784" width="3" height="1" fill="#111"/><rect x="77" y="790" width="3" height="1" fill="#111"/><rect x="77" y="796" width="3" height="1" fill="#111"/><rect x="74" y="802" width="6" height="1" fill="#111"/><rect x="77" y="808" width="3" height="1" fill="#111"/><rect x="77" y="814" width="3" height="1" fill="#111"/><rect x="77" y="820" width="3" height="1" fill="#111"/><rect x="77" y="825" width="3" height="1" fill="#111"/><rect x="65" y="831" width="15" height="1" fill="#111"/><rect x="77" y="837" width="3" height="1" fill="#111"/><rect x="77" y="843" width="3" height="1" fill="#111"/><rect x="77" y="849" width="3" height="1" fill="#111"/><rect x="77" y="855" width="3" height="1" fill="#111"/><rect x="74" y="861" width="6" height="1" fill="#111"/><rect x="77" y="867" width="3" height="1" fill="#111"/><rect x="77" y="872" width="3" height="1" fill="#111"/><rect x="77" y="878" width="3" height="1" fill="#111"/><rect x="77" y="884" width="3" height="1" fill="#111"/><rect x="65" y="890" width="15" height="1" fill="#111"/><rect x="77" y="896" width="3" height="1" fill="#111"/><rect x="77" y="902" width="3" height="1" fill="#111"/><rect x="77" y="908" width="3" height="1" fill="#111"/><rect x="77" y="913" width="3" height="1" fill="#111"/><rect x="74" y="919" width="6" height="1" fill="#111"/><rect x="77" y="925" width="3" height="1" fill="#111"/><rect x="77" y="931" width="3" height="1" fill="#111"/><rect x="77" y="937" width="3" height="1" fill="#111"/><rect x="77" y="943" width="3" height="1" fill="#111"/><rect x="65" y="949" width="15" height="1" fill="#111"/><rect x="77" y="955" width="3" height="1" fill="#111"/><rect x="77" y="960" width="3" height="1" fill="#111"/><rect x="77" y="966" width="3" height="1" fill="#111"/><rect x="77" y="972" width="3" height="1" fill="#111"/><rect x="74" y="978" width="6" height="1" fill="#111"/><rect x="77" y="984" width="3" height="1" fill="#111"/><rect x="77" y="990" width="3" height="1" fill="#111"/><rect x="77" y="996" width="3" height="1" fill="#111"/><rect x="77" y="1001" width="3" height="1" fill="#111"/><rect x="65" y="1007" width="15" height="1" fill="#111"/><rect x="77" y="1013" width="3" height="1" fill="#111"/></svg>
<span style="left:67px;top:114.91px;font-size:9.2px;line-height:9.2px;color:#111;font-weight:400;-webkit-text-stroke:0.2px #111">0</span>
<span style="left:67px;top:164.11px;font-size:9.2px;line-height:9.2px;color:#111;font-weight:400;-webkit-text-stroke:0.2px #111">1</span>
<span style="left:67px;top:173.91px;font-size:9.2px;line-height:9.2px;color:#111;font-weight:400;-webkit-text-stroke:0.2px #111">0</span>
<span style="left:67px;top:223.11px;font-size:9.2px;line-height:9.2px;color:#111;font-weight:400;-webkit-text-stroke:0.2px #111">2</span>
<span style="left:67px;top:232.91px;font-size:9.2px;line-height:9.2px;color:#111;font-weight:400;-webkit-text-stroke:0.2px #111">0</span>
<span style="left:67px;top:281.11px;font-size:9.2px;line-height:9.2px;color:#111;font-weight:400;-webkit-text-stroke:0.2px #111">3</span>
<span style="left:67px;top:290.91px;font-size:9.2px;line-height:9.2px;color:#111;font-weight:400;-webkit-text-stroke:0.2px #111">0</span>
<span style="left:67px;top:340.11px;font-size:9.2px;line-height:9.2px;color:#111;font-weight:400;-webkit-text-stroke:0.2px #111">4</span>
<span style="left:67px;top:349.91px;font-size:9.2px;line-height:9.2px;color:#111;font-weight:400;-webkit-text-stroke:0.2px #111">0</span>
<span style="left:67px;top:399.11px;font-size:9.2px;line-height:9.2px;color:#111;font-weight:400;-webkit-text-stroke:0.2px #111">5</span>
<span style="left:67px;top:408.91px;font-size:9.2px;line-height:9.2px;color:#111;font-weight:400;-webkit-text-stroke:0.2px #111">0</span>
<span style="left:67px;top:457.11px;font-size:9.2px;line-height:9.2px;color:#111;font-weight:400;-webkit-text-stroke:0.2px #111">6</span>
<span style="left:67px;top:466.91px;font-size:9.2px;line-height:9.2px;color:#111;font-weight:400;-webkit-text-stroke:0.2px #111">0</span>
<span style="left:67px;top:516.11px;font-size:9.2px;line-height:9.2px;color:#111;font-weight:400;-webkit-text-stroke:0.2px #111">7</span>
<span style="left:67px;top:525.91px;font-size:9.2px;line-height:9.2px;color:#111;font-weight:400;-webkit-text-stroke:0.2px #111">0</span>
<span style="left:67px;top:575.11px;font-size:9.2px;line-height:9.2px;color:#111;font-weight:400;-webkit-text-stroke:0.2px #111">8</span>
<span style="left:67px;top:584.91px;font-size:9.2px;line-height:9.2px;color:#111;font-weight:400;-webkit-text-stroke:0.2px #111">0</span>
<span style="left:67px;top:633.11px;font-size:9.2px;line-height:9.2px;color:#111;font-weight:400;-webkit-text-stroke:0.2px #111">9</span>
<span style="left:67px;top:642.91px;font-size:9.2px;line-height:9.2px;color:#111;font-weight:400;-webkit-text-stroke:0.2px #111">0</span>
<span style="left:67px;top:682.31px;font-size:9.2px;line-height:9.2px;color:#111;font-weight:400;-webkit-text-stroke:0.2px #111">1</span>
<span style="left:67px;top:692.11px;font-size:9.2px;line-height:9.2px;color:#111;font-weight:400;-webkit-text-stroke:0.2px #111">0</span>
<span style="left:67px;top:701.91px;font-size:9.2px;line-height:9.2px;color:#111;font-weight:400;-webkit-text-stroke:0.2px #111">0</span>
<span style="left:67px;top:741.31px;font-size:9.2px;line-height:9.2px;color:#111;font-weight:400;-webkit-text-stroke:0.2px #111">1</span>
<span style="left:67px;top:751.11px;font-size:9.2px;line-height:9.2px;color:#111;font-weight:400;-webkit-text-stroke:0.2px #111">1</span>
<span style="left:67px;top:760.91px;font-size:9.2px;line-height:9.2px;color:#111;font-weight:400;-webkit-text-stroke:0.2px #111">0</span>
<span style="left:67px;top:799.31px;font-size:9.2px;line-height:9.2px;color:#111;font-weight:400;-webkit-text-stroke:0.2px #111">1</span>
<span style="left:67px;top:809.11px;font-size:9.2px;line-height:9.2px;color:#111;font-weight:400;-webkit-text-stroke:0.2px #111">2</span>
<span style="left:67px;top:818.91px;font-size:9.2px;line-height:9.2px;color:#111;font-weight:400;-webkit-text-stroke:0.2px #111">0</span>
<span style="left:67px;top:858.31px;font-size:9.2px;line-height:9.2px;color:#111;font-weight:400;-webkit-text-stroke:0.2px #111">1</span>
<span style="left:67px;top:868.11px;font-size:9.2px;line-height:9.2px;color:#111;font-weight:400;-webkit-text-stroke:0.2px #111">3</span>
<span style="left:67px;top:877.91px;font-size:9.2px;line-height:9.2px;color:#111;font-weight:400;-webkit-text-stroke:0.2px #111">0</span>
<span style="left:67px;top:917.31px;font-size:9.2px;line-height:9.2px;color:#111;font-weight:400;-webkit-text-stroke:0.2px #111">1</span>
<span style="left:67px;top:927.11px;font-size:9.2px;line-height:9.2px;color:#111;font-weight:400;-webkit-text-stroke:0.2px #111">4</span>
<span style="left:67px;top:936.91px;font-size:9.2px;line-height:9.2px;color:#111;font-weight:400;-webkit-text-stroke:0.2px #111">0</span>
<span style="left:67px;top:975.31px;font-size:9.2px;line-height:9.2px;color:#111;font-weight:400;-webkit-text-stroke:0.2px #111">1</span>
<span style="left:67px;top:985.11px;font-size:9.2px;line-height:9.2px;color:#111;font-weight:400;-webkit-text-stroke:0.2px #111">5</span>
<span style="left:67px;top:994.91px;font-size:9.2px;line-height:9.2px;color:#111;font-weight:400;-webkit-text-stroke:0.2px #111">0</span>
<div style="left:66px;top:109px;width:13px;height:1px;background:repeating-linear-gradient(90deg,#222 0 1px,transparent 1px 2px)"></div>
<div style="left:81px;top:105px;width:1604px;height:915px;background:#f6f6f6"></div>
<div style="left:1685px;top:89px;width:15px;height:931px;background:#ececec"></div>
<div style="left:1700px;top:68px;width:1px;height:968px;background:#2a2a2a"></div>
<svg style="left:1687px;top:92px;" width="10" height="7" viewBox="0 0 10 7"><path d="M1 6 L5 1 L9 6 Z" fill="#444"/></svg>
<svg style="left:1687px;top:1008px;" width="10" height="7" viewBox="0 0 10 7"><path d="M1 1 L9 1 L5 6 Z" fill="#444"/></svg>
<div style="left:1685px;top:546px;width:14px;height:15px;background:linear-gradient(90deg,#f6f6f6,#d8d8d8);border:1px solid #9a9a9a;border-radius:2px;box-sizing:border-box"></div>
<div style="left:65px;top:1020px;width:1635px;height:15px;background:#e9e9e9"></div>
<div style="left:65px;top:1020px;width:1635px;height:1px;background:#d4d4d4"></div>
<div style="left:1685px;top:1020px;width:15px;height:15px;background:#f8f8f8"></div>
<div style="left:65px;top:1021px;width:59px;height:14px;background:#fff"></div>
<span style="left:71px;top:1023.96px;font-size:9.5px;line-height:9.5px;color:#111;font-weight:400;">207%</span>
<svg style="left:111px;top:1026px;" width="9" height="6" viewBox="0 0 9 6"><path d="M0 0 L8 0 L4 5 Z" fill="#000"/></svg>
<div style="left:124px;top:1021px;width:34px;height:14px;background:#d6d6d6"></div>
<svg style="left:127px;top:1023px;" width="28" height="9" viewBox="0 0 28 9"><path d="M1 0 V8 M7 0 L3 4 L7 8 Z" stroke="#888" fill="#888"/><path d="M25 0 L21 4 L25 8 Z" fill="#aaa"/></svg>
<div style="left:158px;top:1021px;width:42px;height:14px;background:#fff"></div>
<span style="left:163px;top:1024.38px;font-size:9.0px;line-height:9.0px;color:#111;font-weight:400;letter-spacing:0.45px;-webkit-text-stroke:0.25px #111;">1</span>
<svg style="left:189px;top:1026px;" width="9" height="6" viewBox="0 0 9 6"><path d="M0 0 L8 0 L4 5 Z" fill="#000"/></svg>
<div style="left:200px;top:1021px;width:34px;height:14px;background:#d6d6d6"></div>
<svg style="left:206px;top:1023px;" width="28" height="9" viewBox="0 0 28 9"><path d="M1 0 L5 4 L1 8 Z" fill="#aaa"/><path d="M17 0 L21 4 L17 8 Z M23 0 V8" stroke="#888" fill="#888"/></svg>
<div style="left:236px;top:1021px;width:177px;height:14px;background:linear-gradient(#dcdcdc,#cfcfcf);border:1px solid #bdbdbd;box-sizing:border-box"></div>
<span style="left:307px;top:1023.38px;font-size:9.0px;line-height:9.0px;color:#222;font-weight:400;letter-spacing:0.45px;-webkit-text-stroke:0.25px #222;">Auswahl</span>
<svg style="left:402px;top:1023px;" width="7" height="10" viewBox="0 0 7 10"><path d="M1 0 L6 5 L1 10 Z" fill="#000"/></svg>
<svg style="left:419px;top:1023px;" width="6" height="8" viewBox="0 0 6 8"><path d="M5 0 L1 4 L5 8 Z" fill="#444"/></svg>
<svg style="left:1672px;top:1023px;" width="7" height="9" viewBox="0 0 7 9"><path d="M1 0 L6 4.5 L1 9 Z" fill="#333"/></svg>
<div style="left:1041px;top:1020px;width:15px;height:14px;background:linear-gradient(#f8f8f8,#d4d4d4);border:1px solid #9a9a9a;border-radius:2px;box-sizing:border-box"></div>
<div style="left:4px;top:1035px;width:1912px;height:1px;background:#3a3a3a"></div>
<div style="left:0px;top:1036px;width:1920px;height:3px;background:#dcdcdc"></div>
<div style="left:562px;top:116px;width:641px;height:893px;background:#e05a22;border:2px solid #b02830;box-sizing:border-box"></div>
<div style="left:563px;top:117px;width:639px;height:275px;background:#767989"></div>
<div style="left:575px;top:392px;width:615px;height:604px;background:#c6c6c6"></div>
<div style="left:591px;top:392px;width:581px;height:586px;background:#fff"></div>
<svg style="left:0;top:0" width="1920" height="1040" viewBox="0 0 1920 1040" shape-rendering="crispEdges"><rect x="601.80" y="392" width="1" height="557" fill="#d8d8d8"/><rect x="631.17" y="392" width="1" height="557" fill="#d8d8d8"/><rect x="660.54" y="392" width="1" height="557" fill="#d8d8d8"/><rect x="689.91" y="392" width="1" height="557" fill="#d8d8d8"/><rect x="719.28" y="392" width="1" height="557" fill="#d8d8d8"/><rect x="748.65" y="392" width="1" height="557" fill="#d8d8d8"/><rect x="778.02" y="392" width="1" height="557" fill="#d8d8d8"/><rect x="807.39" y="392" width="1" height="557" fill="#d8d8d8"/><rect x="836.76" y="392" width="1" height="557" fill="#d8d8d8"/><rect x="866.13" y="392" width="1" height="557" fill="#d8d8d8"/><rect x="895.50" y="392" width="1" height="557" fill="#d8d8d8"/><rect x="924.87" y="392" width="1" height="557" fill="#d8d8d8"/><rect x="954.24" y="392" width="1" height="557" fill="#d8d8d8"/><rect x="983.61" y="392" width="1" height="557" fill="#d8d8d8"/><rect x="1012.98" y="392" width="1" height="557" fill="#d8d8d8"/><rect x="1042.35" y="392" width="1" height="557" fill="#d8d8d8"/><rect x="1071.72" y="392" width="1" height="557" fill="#d8d8d8"/><rect x="1101.09" y="392" width="1" height="557" fill="#d8d8d8"/><rect x="1130.46" y="392" width="1" height="557" fill="#d8d8d8"/><rect x="1159.83" y="392" width="1" height="557" fill="#d8d8d8"/><rect x="602" y="420.00" width="559" height="1" fill="#d4d4d4"/><rect x="602" y="449.37" width="559" height="1" fill="#d4d4d4"/><rect x="602" y="478.74" width="559" height="1" fill="#d4d4d4"/><rect x="602" y="508.11" width="559" height="1" fill="#d4d4d4"/><rect x="602" y="537.48" width="559" height="1" fill="#d4d4d4"/><rect x="602" y="566.85" width="559" height="1" fill="#d4d4d4"/><rect x="602" y="596.22" width="559" height="1" fill="#d4d4d4"/><rect x="602" y="625.59" width="559" height="1" fill="#d4d4d4"/><rect x="602" y="654.96" width="559" height="1" fill="#d4d4d4"/><rect x="602" y="684.33" width="559" height="1" fill="#d4d4d4"/><rect x="602" y="713.70" width="559" height="1" fill="#d4d4d4"/><rect x="602" y="743.07" width="559" height="1" fill="#d4d4d4"/><rect x="602" y="772.44" width="559" height="1" fill="#d4d4d4"/><rect x="602" y="801.81" width="559" height="1" fill="#d4d4d4"/><rect x="602" y="831.18" width="559" height="1" fill="#d4d4d4"/><rect x="602" y="860.55" width="559" height="1" fill="#d4d4d4"/><rect x="602" y="889.92" width="559" height="1" fill="#d4d4d4"/><rect x="602" y="919.29" width="559" height="1" fill="#d4d4d4"/></svg>
<div style="left:574px;top:128px;width:617px;height:869px;border:1px solid #0a0a14;box-sizing:border-box"></div>
<svg style="left:0;top:0" width="1920" height="1040" viewBox="0 0 1920 1040"><rect x="563" y="942.5" width="639" height="2" fill="#000"/><rect x="562" y="933" width="2" height="20" fill="#000"/><rect x="1200" y="933" width="2" height="20" fill="#000"/><rect x="575" y="971.5" width="614" height="2" fill="#000"/><rect x="574" y="962" width="2" height="20" fill="#000"/><rect x="1188" y="962" width="2" height="20" fill="#000"/><rect x="1135.8" y="392" width="2" height="616" fill="#000"/><rect x="1127" y="1005" width="20" height="3" fill="#000"/><rect x="1165.3" y="392" width="2" height="604" fill="#333"/><rect x="1156" y="993.5" width="20" height="3" fill="#000"/></svg>
<span style="left:848px;top:921.09px;font-size:18.8px;line-height:18.8px;color:#111;font-weight:400;">109 mm</span>
<span style="left:848px;top:950.09px;font-size:18.8px;line-height:18.8px;color:#111;font-weight:400;">105 mm</span>
<span style="left:1115.3px;top:596px;font-size:18.8px;line-height:18.8px;color:#111;transform-origin:0 0;transform:rotate(-90deg)">152 mm</span>
<span style="left:1143.8px;top:596px;font-size:18.8px;line-height:18.8px;color:#111;transform-origin:0 0;transform:rotate(-90deg)">148 mm</span>
<div style="left:738px;top:230px;width:18px;height:59px;background:#abbd25"></div>
<div style="left:663px;top:230px;width:66px;height:60px;background:#abbd25;border-style:solid;border-color:#138a3c;border-width:1.5px 1px 2px 2px;box-sizing:border-box"></div>
<div style="left:661.5px;top:227.5px;width:5.5px;height:5.5px;background:#fff;border:1px solid #138a3c;box-sizing:border-box"></div>
<div style="left:661.5px;top:257.2px;width:5.5px;height:5.5px;background:#fff;border:1px solid #138a3c;box-sizing:border-box"></div>
<div style="left:661.5px;top:286.5px;width:5.5px;height:5.5px;background:#fff;border:1px solid #138a3c;box-sizing:border-box"></div>
<div style="left:693.5px;top:227.5px;width:5.5px;height:5.5px;background:#fff;border:1px solid #138a3c;box-sizing:border-box"></div>
<div style="left:694px;top:257.7px;width:4px;height:4px;background:#138a3c"></div>
<div style="left:693.5px;top:286.5px;width:5.5px;height:5.5px;background:#fff;border:1px solid #138a3c;box-sizing:border-box"></div>
<div style="left:726.0px;top:227.5px;width:5.5px;height:5.5px;background:#fff;border:1px solid #138a3c;box-sizing:border-box"></div>
<div style="left:726.0px;top:257.2px;width:5.5px;height:5.5px;background:#fff;border:1px solid #138a3c;box-sizing:border-box"></div>
<div style="left:726.0px;top:286.5px;width:5.5px;height:5.5px;background:#fff;border:1px solid #138a3c;box-sizing:border-box"></div>
<div style="left:1700px;top:81px;width:216px;height:955px;background:#d6d6d6"></div>
<div style="left:1915px;top:68px;width:1px;height:968px;background:#3a3a3a"></div>
<div style="left:1701px;top:81px;width:214px;height:17px;background:linear-gradient(#a4a4a4,#8e8e8e)"></div>
<div style="left:1701px;top:81px;width:49px;height:17px;background:linear-gradient(#ececec,#d6d6d6)"></div>
<svg style="left:1704px;top:85px;" width="7" height="10" viewBox="0 0 7 10"><path d="M0.5 4 L3.5 1 L6.5 4 M0.5 6 L3.5 9 L6.5 6" fill="none" stroke="#222" stroke-width="1.2"/></svg>
<span style="left:1714px;top:85.88px;font-size:9.0px;line-height:9.0px;color:#333;font-weight:400;letter-spacing:0.45px;-webkit-text-stroke:0.25px #333;">Farbe</span>
<div style="left:1750px;top:81px;width:1px;height:17px;background:#7a7a7a"></div>
<span style="left:1757px;top:85.88px;font-size:9.0px;line-height:9.0px;color:#2a2a2a;font-weight:400;letter-spacing:0.45px;-webkit-text-stroke:0.25px #2a2a2a;">Farbfelder</span>
<div style="left:1812px;top:81px;width:1px;height:17px;background:#7a7a7a"></div>
<span style="left:1819px;top:85.88px;font-size:9.0px;line-height:9.0px;color:#2a2a2a;font-weight:400;letter-spacing:0.45px;-webkit-text-stroke:0.25px #2a2a2a;">Farbhilfe</span>
<div style="left:1868px;top:81px;width:1px;height:17px;background:#7a7a7a"></div>
<svg style="left:1896px;top:85px;" width="16" height="10" viewBox="0 0 16 10"><path d="M0 3 L4 3 L2 5.5 Z" fill="#222"/><path d="M6 1.5 H15 M6 4.5 H15 M6 7.5 H15" stroke="#222" stroke-width="1.2"/></svg>
<div style="left:1714px;top:114px;width:20px;height:20px;background:#fff;border:1px solid #111;box-sizing:border-box"></div>
<svg style="left:1714px;top:114px;" width="20" height="20" viewBox="0 0 20 20"><rect x="6.5" y="6.5" width="7" height="7" fill="#ddd" stroke="#111"/><path d="M1 19 L19 1" stroke="#b0103a" stroke-width="2"/></svg>
<div style="left:1705px;top:105px;width:20px;height:19px;background:#a9be2b;border:1px solid #111;box-sizing:border-box"></div>
<svg style="left:1706px;top:139px;" width="12" height="12" viewBox="0 0 12 12"><path d="M6 1 L11 3.5 L11 9 L6 11.5 L1 9 L1 3.5 Z M1 3.5 L6 6 L11 3.5 M6 6 V11.5" fill="#fff" stroke="#222"/><path d="M1 3.5 L6 6 V11.5 L1 9 Z" fill="#888" stroke="#222"/></svg>
<div style="left:1721px;top:139px;width:14px;height:13px;background:#93c13a;border:1px solid #111;box-sizing:border-box"></div>
<span style="left:1744px;top:106.38px;font-size:9.0px;line-height:9.0px;color:#222;font-weight:400;letter-spacing:0.45px;-webkit-text-stroke:0.25px #222;">C</span>
<div style="left:1757px;top:106px;width:101px;height:7px;background:linear-gradient(90deg,#ecd92e,#c6cf30 35%,#5aa848 70%,#128a50);border:1px solid #111;box-sizing:border-box"></div>
<svg style="left:1792px;top:113px;" width="9" height="6" viewBox="0 0 9 6"><path d="M4.5 0.5 L8.5 5.5 L0.5 5.5 Z" fill="#f4f4f4" stroke="#666"/></svg>
<div style="left:1864px;top:101px;width:33px;height:17px;background:#fff;border:1px solid #d8d8d8;box-sizing:border-box"></div>
<span style="left:1869px;top:106.38px;font-size:9.0px;line-height:9.0px;color:#111;font-weight:400;letter-spacing:0.45px;-webkit-text-stroke:0.25px #111;">38,93</span>
<span style="left:1900px;top:106.38px;font-size:9.0px;line-height:9.0px;color:#222;font-weight:400;letter-spacing:0.45px;-webkit-text-stroke:0.25px #222;">%</span>
<span style="left:1744px;top:124.38px;font-size:9.0px;line-height:9.0px;color:#222;font-weight:400;letter-spacing:0.45px;-webkit-text-stroke:0.25px #222;">M</span>
<div style="left:1757px;top:124px;width:101px;height:7px;background:linear-gradient(90deg,#a9c131,#a7a33a 40%,#b8583a 80%,#c2303a);border:1px solid #111;box-sizing:border-box"></div>
<svg style="left:1765px;top:131px;" width="9" height="6" viewBox="0 0 9 6"><path d="M4.5 0.5 L8.5 5.5 L0.5 5.5 Z" fill="#f4f4f4" stroke="#666"/></svg>
<div style="left:1864px;top:119px;width:33px;height:17px;background:#fff;border:1px solid #d8d8d8;box-sizing:border-box"></div>
<span style="left:1869px;top:124.38px;font-size:9.0px;line-height:9.0px;color:#111;font-weight:400;letter-spacing:0.45px;-webkit-text-stroke:0.25px #111;">12,04</span>
<span style="left:1900px;top:124.38px;font-size:9.0px;line-height:9.0px;color:#222;font-weight:400;letter-spacing:0.45px;-webkit-text-stroke:0.25px #222;">%</span>
<span style="left:1744px;top:142.38px;font-size:9.0px;line-height:9.0px;color:#222;font-weight:400;letter-spacing:0.45px;-webkit-text-stroke:0.25px #222;">Y</span>
<div style="left:1757px;top:142px;width:101px;height:7px;background:linear-gradient(90deg,#b7cde6,#b8cfa8 50%,#aac850 90%,#a9c437);border:1px solid #111;box-sizing:border-box"></div>
<svg style="left:1850px;top:149px;" width="9" height="6" viewBox="0 0 9 6"><path d="M4.5 0.5 L8.5 5.5 L0.5 5.5 Z" fill="#f4f4f4" stroke="#666"/></svg>
<div style="left:1864px;top:137px;width:33px;height:17px;background:#fff;border:1px solid #d8d8d8;box-sizing:border-box"></div>
<span style="left:1869px;top:142.38px;font-size:9.0px;line-height:9.0px;color:#111;font-weight:400;letter-spacing:0.45px;-webkit-text-stroke:0.25px #111;">96,63</span>
<span style="left:1900px;top:142.38px;font-size:9.0px;line-height:9.0px;color:#222;font-weight:400;letter-spacing:0.45px;-webkit-text-stroke:0.25px #222;">%</span>
<span style="left:1744px;top:160.38px;font-size:9.0px;line-height:9.0px;color:#222;font-weight:400;letter-spacing:0.45px;-webkit-text-stroke:0.25px #222;">K</span>
<div style="left:1757px;top:160px;width:101px;height:7px;background:linear-gradient(90deg,#a9c131,#6f8020 50%,#2a3010 85%,#121408);border:1px solid #111;box-sizing:border-box"></div>
<svg style="left:1754px;top:167px;" width="9" height="6" viewBox="0 0 9 6"><path d="M4.5 0.5 L8.5 5.5 L0.5 5.5 Z" fill="#f4f4f4" stroke="#666"/></svg>
<div style="left:1864px;top:155px;width:33px;height:17px;background:#fff;border:1px solid #d8d8d8;box-sizing:border-box"></div>
<span style="left:1869px;top:160.38px;font-size:9.0px;line-height:9.0px;color:#111;font-weight:400;letter-spacing:0.45px;-webkit-text-stroke:0.25px #111;">0,92</span>
<span style="left:1900px;top:160.38px;font-size:9.0px;line-height:9.0px;color:#222;font-weight:400;letter-spacing:0.45px;-webkit-text-stroke:0.25px #222;">%</span>
<div style="left:1706px;top:174px;width:200px;height:17px;background:#000;border:1px solid #111;box-sizing:border-box"></div>
<div style="left:1707px;top:175px;width:15px;height:15px;background:#fff"></div>
<svg style="left:1707px;top:175px;" width="15" height="15" viewBox="0 0 15 15"><path d="M0 15 L15 0" stroke="#c0103a" stroke-width="2"/></svg>
<div style="left:1722px;top:175px;width:168px;height:15px;background:linear-gradient(#0000 0%,#0000 40%,#000 100%),linear-gradient(90deg,#e01e2c,#f07a20 10%,#f2e12a 22%,#a6d132 32%,#2fb54a 45%,#2bb5b8 55%,#4aa8e8 62%,#2a3c9c 72%,#8a3c9c 84%,#e2147c 95%,#e0102a)"></div>
<div style="left:1722px;top:175px;width:168px;height:7px;background:linear-gradient(#fff8 0%,#fff0 100%)"></div>
<div style="left:1890px;top:175px;width:15px;height:7px;background:#fff"></div>
<div style="left:1890px;top:182px;width:15px;height:8px;background:#000"></div>
<div style="left:1700px;top:199px;width:216px;height:3px;background:#3a3a3a"></div>
<div style="left:1701px;top:202px;width:214px;height:18px;background:linear-gradient(#a4a4a4,#8e8e8e)"></div>
<div style="left:1701px;top:202px;width:41px;height:18px;background:linear-gradient(#ececec,#d6d6d6)"></div>
<span style="left:1708px;top:206.88px;font-size:9.0px;line-height:9.0px;color:#333;font-weight:400;letter-spacing:0.45px;-webkit-text-stroke:0.25px #333;">Pinsel</span>
<div style="left:1742px;top:202px;width:1px;height:18px;background:#7a7a7a"></div>
<span style="left:1749px;top:206.88px;font-size:9.0px;line-height:9.0px;color:#2a2a2a;font-weight:400;letter-spacing:0.45px;-webkit-text-stroke:0.25px #2a2a2a;">Symbole</span>
<div style="left:1797px;top:202px;width:1px;height:18px;background:#7a7a7a"></div>
<span style="left:1805px;top:206.88px;font-size:9.0px;line-height:9.0px;color:#2a2a2a;font-weight:400;letter-spacing:0.45px;-webkit-text-stroke:0.25px #2a2a2a;">Grafikstile</span>
<div style="left:1862px;top:202px;width:1px;height:18px;background:#7a7a7a"></div>
<svg style="left:1896px;top:206px;" width="16" height="10" viewBox="0 0 16 10"><path d="M0 3 L4 3 L2 5.5 Z" fill="#222"/><path d="M6 1.5 H15 M6 4.5 H15 M6 7.5 H15" stroke="#222" stroke-width="1.2"/></svg>
<div style="left:1703px;top:220px;width:195px;height:214px;background:#fff"></div>
<div style="left:1703px;top:220px;width:195px;height:1px;background:#111"></div>
<div style="left:1898px;top:221px;width:15px;height:213px;background:#ececec"></div>
<svg style="left:1902px;top:227px;" width="9" height="6" viewBox="0 0 9 6"><path d="M0.5 5.5 L4.5 1 L8.5 5.5 Z" fill="#555"/></svg>
<div style="left:1899px;top:239px;width:14px;height:15px;background:linear-gradient(90deg,#fafafa,#d0d0d0);border:1px solid #9a9a9a;border-radius:2px;box-sizing:border-box"></div>
<svg style="left:1902px;top:422px;" width="9" height="6" viewBox="0 0 9 6"><path d="M0.5 0.5 L8.5 0.5 L4.5 5 Z" fill="#555"/></svg>
<div style="left:1734px;top:221px;width:1px;height:32px;background:#111"></div>
<div style="left:1766px;top:221px;width:1px;height:32px;background:#111"></div>
<div style="left:1798px;top:221px;width:1px;height:32px;background:#111"></div>
<div style="left:1830px;top:221px;width:1px;height:32px;background:#111"></div>
<div style="left:1862px;top:221px;width:1px;height:32px;background:#111"></div>
<div style="left:1894px;top:221px;width:1px;height:32px;background:#111"></div>
<div style="left:1703px;top:252px;width:192px;height:1px;background:#111"></div>
<svg style="left:1703px;top:221px;" width="192" height="31" viewBox="0 0 192 31"><rect x="14" y="15" width="3" height="2" fill="#111"/><ellipse cx="49" cy="15.5" rx="3" ry="1.8" fill="#111"/><rect x="79.5" y="13" width="1" height="6" fill="#999"/><path d="M111.5 13.5 L113.5 15.5 L111.5 17.5 L109.5 15.5 Z" fill="#111"/><circle cx="143.5" cy="15.5" r="3.8" fill="#111"/><circle cx="175.5" cy="15.5" r="7.6" fill="#111"/></svg>
<div style="left:1709px;top:268px;width:148px;height:3px;background:#000"></div>
<span style="left:1863px;top:264.88px;font-size:9.0px;line-height:9.0px;color:#111;font-weight:400;letter-spacing:0.45px;-webkit-text-stroke:0.25px #111;">Einfach</span>
<div style="left:1703px;top:284px;width:195px;height:1px;background:#111"></div>
<div style="left:1703px;top:316px;width:195px;height:1px;background:#111"></div>
<div style="left:1703px;top:348px;width:195px;height:1px;background:#111"></div>
<div style="left:1703px;top:380px;width:195px;height:1px;background:#111"></div>
<div style="left:1703px;top:412px;width:195px;height:1px;background:#111"></div>
<div style="left:1703px;top:433px;width:195px;height:1px;background:#111"></div>
<svg style="left:1703px;top:285px;" width="195" height="149" viewBox="0 0 195 149"><path d="M7 14 C40 12, 100 11, 189 12.5 L189 14.5 C100 16, 40 16.5, 7 15.5 Z" fill="#111"/><path d="M6 47 C20 43, 60 43.5, 189 44.5 C178 51, 60 51, 20 51 Z" fill="#111"/><path d="M6 79 C40 76, 80 76, 105 77 C110 72, 118 71, 124 74 C140 68, 160 65, 175 67 C183 69, 189 74, 189 82 C183 76, 172 76, 150 82 C135 86, 120 90, 110 89 C104 92, 98 90, 94 86 C90 84, 85 81, 80 80 C60 80, 30 81, 6 81 Z" fill="#111"/><path d="M95 84 C100 88, 106 92, 113 92" fill="none" stroke="#111" stroke-width="2.5"/><path d="M12 127 V111 C12 108, 13 107.5, 16 107.5 H110.5 V95.5 H115 V111 C115 114, 113 115, 110 115 H20 C19 115, 18.5 116, 18.5 117 V127 Z" fill="#c8202e" stroke="#111" stroke-width="1"/><rect x="128.5" y="108.5" width="32" height="6" fill="#c8202e" stroke="#111" stroke-width="1"/><path d="M159.5 106 L159.5 98.5 L190 111.5 L159.5 124.5 L159.5 117 Z" fill="#c8202e" stroke="#111" stroke-width="0.8"/><rect x="31" y="96" width="1" height="4" fill="#111"/><rect x="31" y="121" width="1" height="11" fill="#111"/><rect x="63" y="96" width="1" height="4" fill="#111"/><rect x="63" y="121" width="1" height="11" fill="#111"/><rect x="95" y="96" width="1" height="4" fill="#111"/><rect x="95" y="121" width="1" height="11" fill="#111"/><rect x="127" y="96" width="1" height="4" fill="#111"/><rect x="127" y="121" width="1" height="11" fill="#111"/><rect x="159" y="96" width="1" height="4" fill="#111"/><rect x="159" y="121" width="1" height="11" fill="#111"/><rect x="31" y="100" width="1" height="21" fill="#fff" opacity="0.7"/><rect x="63" y="100" width="1" height="21" fill="#fff" opacity="0.7"/><rect x="95" y="100" width="1" height="21" fill="#fff" opacity="0.7"/><rect x="127" y="100" width="1" height="21" fill="#fff" opacity="0.7"/><rect x="159" y="100" width="1" height="21" fill="#fff" opacity="0.7"/><g fill="none" stroke="#5a5a5a" stroke-width="1.3"><path d="M1 147 C0 138, 5 130, 12 131 C20 132, 25 140, 26 147"/><path d="M6 146 C6 140, 10 136, 14 137 C18 138, 19 143, 18 147"/><path d="M3 134 C8 131, 16 130, 24 133"/><path d="M22 130 C25 132, 25 135, 22 136"/><path d="M102 147 C101 138, 106 130, 113 131 C121 132, 126 140, 127 147"/><path d="M107 146 C107 140, 111 136, 115 137 C119 138, 120 143, 119 147"/><path d="M104 134 C109 131, 117 130, 125 133"/><path d="M120 128 V140 M123 128 V140"/></g><path d="M26 135.5 H102 M26 142.5 H102" stroke="#777" stroke-width="0.9"/><path d="M33 142.5 L43 140.5 L53 142.5 L43 144.5 Z M73 142.5 L83 140.5 L93 142.5 L83 144.5 Z M54 142.5 L58 141 L62 142.5 L58 144 Z" fill="#666"/><rect x="31" y="127" width="1" height="5" fill="#111"/><rect x="63" y="127" width="1" height="5" fill="#111"/><rect x="95" y="127" width="1" height="5" fill="#111"/><rect x="127" y="127" width="1" height="5" fill="#111"/><rect x="159" y="127" width="1" height="5" fill="#111"/></svg>
<div style="left:1701px;top:434px;width:214px;height:18px;background:#d6d6d6"></div>
<svg style="left:1714px;top:437px;" width="16" height="14" viewBox="0 0 16 14"><rect x="1.5" y="1.5" width="9" height="8" fill="#eee" stroke="#444"/><rect x="4.5" y="4.5" width="9" height="8" fill="#ddd" stroke="#444"/><path d="M13 13 L15 11 L15 13 Z" fill="#111"/></svg>
<svg style="left:1779px;top:437px;" width="12" height="12" viewBox="0 0 12 12"><path d="M1 1 L11 11 M11 1 L1 11" stroke="#aaa" stroke-width="1.5"/></svg>
<svg style="left:1803px;top:437px;" width="26" height="12" viewBox="0 0 26 12"><path d="M1 11 L11 1" stroke="#aaa" stroke-width="1.5"/><path d="M13 4 H24 M13 7 H24 M13 10 H24" stroke="#aaa"/></svg>
<svg style="left:1848px;top:437px;" width="12" height="12" viewBox="0 0 12 12"><rect x="1.5" y="1.5" width="9" height="9" fill="#fff" stroke="#222"/><rect x="4" y="5" width="4" height="4" fill="none" stroke="#222"/></svg>
<svg style="left:1878px;top:436px;" width="12" height="13" viewBox="0 0 12 13"><path d="M2 3 H10 L9 12 H3 Z" fill="#eee" stroke="#222"/><path d="M1 3 H11 M4 1 H8" stroke="#222"/></svg>
<div style="left:1700px;top:452px;width:216px;height:3px;background:#3a3a3a"></div>
<div style="left:1701px;top:455px;width:214px;height:17px;background:linear-gradient(#a4a4a4,#8e8e8e)"></div>
<div style="left:1701px;top:455px;width:47px;height:18px;background:linear-gradient(#ececec,#d6d6d6)"></div>
<span style="left:1708px;top:459.88px;font-size:9.0px;line-height:9.0px;color:#333;font-weight:400;letter-spacing:0.45px;-webkit-text-stroke:0.25px #333;">Ebenen</span>
<div style="left:1748px;top:455px;width:1px;height:17px;background:#7a7a7a"></div>
<span style="left:1755px;top:459.88px;font-size:9.0px;line-height:9.0px;color:#2a2a2a;font-weight:400;letter-spacing:0.45px;-webkit-text-stroke:0.25px #2a2a2a;">Zeichen</span>
<div style="left:1798px;top:455px;width:1px;height:17px;background:#7a7a7a"></div>
<span style="left:1805px;top:459.88px;font-size:9.0px;line-height:9.0px;color:#2a2a2a;font-weight:400;letter-spacing:0.45px;-webkit-text-stroke:0.25px #2a2a2a;">Absatz</span>
<div style="left:1844px;top:455px;width:1px;height:17px;background:#7a7a7a"></div>
<svg style="left:1896px;top:459px;" width="16" height="10" viewBox="0 0 16 10"><path d="M0 3 L4 3 L2 5.5 Z" fill="#222"/><path d="M6 1.5 H15 M6 4.5 H15 M6 7.5 H15" stroke="#222" stroke-width="1.2"/></svg>
<div style="left:1703px;top:473px;width:195px;height:1px;background:#111"></div>
<div style="left:1703px;top:474px;width:195px;height:237px;background:#d6d6d6"></div>
<div style="left:1898px;top:474px;width:15px;height:237px;background:#ececec"></div>
<svg style="left:1902px;top:482px;" width="9" height="6" viewBox="0 0 9 6"><path d="M0.5 5.5 L4.5 1 L8.5 5.5 Z" fill="#888"/></svg>
<svg style="left:1902px;top:700px;" width="9" height="6" viewBox="0 0 9 6"><path d="M0.5 0.5 L8.5 0.5 L4.5 5 Z" fill="#888"/></svg>
<div style="left:1703px;top:494px;width:195px;height:1px;background:#f4f4f4"></div>
<div style="left:1703px;top:513px;width:195px;height:1px;background:#111"></div>
<div style="left:1747px;top:474px;width:1px;height:39px;background:#222"></div>
<div style="left:1707px;top:476px;width:13px;height:15px;background:#e4e4e4;border:1px solid #f2f2f2;box-sizing:border-box"></div>
<svg style="left:1706px;top:477px;" width="14" height="12" viewBox="0 0 14 12"><path d="M1 6 C4 1.5, 10 1.5, 13 6 C10 10.5, 4 10.5, 1 6 Z" fill="#fff" stroke="#111" stroke-width="1.2"/><circle cx="7" cy="6" r="2.6" fill="#111"/><circle cx="6.2" cy="5.2" r="0.8" fill="#fff"/></svg>
<div style="left:1723px;top:476px;width:12px;height:15px;background:#dadada;border:1px solid #eee;box-sizing:border-box"></div>
<svg style="left:1753px;top:479px;" width="7" height="11" viewBox="0 0 7 11"><path d="M1 1 L6 5.5 L1 10 Z" fill="#fff" stroke="#777"/></svg>
<div style="left:1707px;top:497px;width:13px;height:15px;background:#e4e4e4;border:1px solid #f2f2f2;box-sizing:border-box"></div>
<svg style="left:1706px;top:498px;" width="14" height="12" viewBox="0 0 14 12"><path d="M1 6 C4 1.5, 10 1.5, 13 6 C10 10.5, 4 10.5, 1 6 Z" fill="#fff" stroke="#111" stroke-width="1.2"/><circle cx="7" cy="6" r="2.6" fill="#111"/><circle cx="6.2" cy="5.2" r="0.8" fill="#fff"/></svg>
<div style="left:1723px;top:497px;width:12px;height:15px;background:#dadada;border:1px solid #eee;box-sizing:border-box"></div>
<svg style="left:1753px;top:500px;" width="7" height="11" viewBox="0 0 7 11"><path d="M1 1 L6 5.5 L1 10 Z" fill="#fff" stroke="#777"/></svg>
<div style="left:1739px;top:477px;width:4px;height:14px;background:#178a48"></div>
<div style="left:1739px;top:498px;width:4px;height:14px;background:#f06020"></div>
<svg style="left:1724px;top:498px;" width="11" height="13" viewBox="0 0 11 13"><path d="M3 6 V4 A2.5 2.5 0 0 1 8 4 V6" fill="none" stroke="#111" stroke-width="1.3"/><rect x="1.5" y="6" width="8" height="6" fill="#222"/></svg>
<div style="left:1763px;top:474px;width:134px;height:20px;background:#3a97ec"></div>
<div style="left:1765px;top:476px;width:17px;height:17px;background:#fff;border:1px solid #111;box-sizing:border-box"></div>
<div style="left:1767px;top:478px;width:13px;height:3px;background:#888"></div>
<div style="left:1767px;top:481px;width:13px;height:9px;background:#c8c8c8"></div>
<span style="left:1786px;top:480.88px;font-size:9.0px;line-height:9.0px;color:#fff;font-weight:700;letter-spacing:0.45px;-webkit-text-stroke:0.25px #fff;">Meine Ebene</span>
<svg style="left:1873px;top:478px;" width="12" height="12" viewBox="0 0 12 12"><circle cx="6" cy="6" r="4.4" fill="none" stroke="#153a7a" stroke-width="1.3"/></svg>
<div style="left:1889px;top:481px;width:6px;height:6px;background:#138a3c"></div>
<svg style="left:1889px;top:474px;" width="8" height="6" viewBox="0 0 8 6"><path d="M0 0 L8 0 L8 6 Z" fill="#111"/></svg>
<div style="left:1765px;top:496px;width:17px;height:17px;background:#fff;border:1px solid #111;box-sizing:border-box"></div>
<span style="left:1785px;top:500.88px;font-size:9.0px;line-height:9.0px;color:#111;font-weight:400;letter-spacing:0.45px;-webkit-text-stroke:0.25px #111;">Vorlage</span>
<svg style="left:1873px;top:498px;" width="12" height="12" viewBox="0 0 12 12"><circle cx="6" cy="6" r="4.4" fill="none" stroke="#444" stroke-width="1.2"/></svg>
<div style="left:1703px;top:710px;width:195px;height:1px;background:#111"></div>
<div style="left:1701px;top:711px;width:214px;height:17px;background:#d6d6d6"></div>
<span style="left:1712px;top:713.88px;font-size:9.0px;line-height:9.0px;color:#111;font-weight:400;letter-spacing:0.45px;-webkit-text-stroke:0.25px #111;">2 Ebenen</span>
<svg style="left:1781px;top:713px;" width="14" height="13" viewBox="0 0 14 13"><rect x="1.5" y="1.5" width="8" height="8" fill="#eee" stroke="#888" stroke-dasharray="1 1"/><circle cx="8" cy="8" r="4.5" fill="#fff" stroke="#222"/><path d="M8 5 V8 H5" stroke="#222"/></svg>
<svg style="left:1810px;top:714px;" width="16" height="12" viewBox="0 0 16 12"><path d="M1 6 H7 M5 3.5 L8 6 L5 8.5" fill="none" stroke="#222" stroke-width="1.2"/><rect x="9.5" y="3.5" width="6" height="7" fill="#fff" stroke="#222"/></svg>
<svg style="left:1848px;top:714px;" width="12" height="12" viewBox="0 0 12 12"><rect x="1.5" y="1.5" width="9" height="9" fill="#fff" stroke="#222"/><rect x="4" y="5" width="4" height="4" fill="none" stroke="#222"/></svg>
<svg style="left:1878px;top:713px;" width="12" height="13" viewBox="0 0 12 13"><path d="M2 3 H10 L9 12 H3 Z" fill="#eee" stroke="#222"/><path d="M1 3 H11 M4 1 H8" stroke="#222"/></svg>
<div style="left:1700px;top:728px;width:216px;height:3px;background:#3a3a3a"></div>
<div style="left:1701px;top:731px;width:214px;height:17px;background:linear-gradient(#a4a4a4,#8e8e8e)"></div>
<div style="left:1701px;top:731px;width:58px;height:18px;background:linear-gradient(#ececec,#d6d6d6)"></div>
<span style="left:1708px;top:735.88px;font-size:9.0px;line-height:9.0px;color:#333;font-weight:400;letter-spacing:0.45px;-webkit-text-stroke:0.25px #333;">Aussehen</span>
<div style="left:1759px;top:731px;width:1px;height:17px;background:#7a7a7a"></div>
<span style="left:1766px;top:735.88px;font-size:9.0px;line-height:9.0px;color:#2a2a2a;font-weight:400;letter-spacing:0.45px;-webkit-text-stroke:0.25px #2a2a2a;">Verlauf</span>
<div style="left:1808px;top:731px;width:1px;height:17px;background:#7a7a7a"></div>
<span style="left:1815px;top:735.88px;font-size:9.0px;line-height:9.0px;color:#2a2a2a;font-weight:400;letter-spacing:0.45px;-webkit-text-stroke:0.25px #2a2a2a;">Transparenz</span>
<div style="left:1876px;top:731px;width:1px;height:17px;background:#7a7a7a"></div>
<svg style="left:1896px;top:735px;" width="16" height="10" viewBox="0 0 16 10"><path d="M0 3 L4 3 L2 5.5 Z" fill="#222"/><path d="M6 1.5 H15 M6 4.5 H15 M6 7.5 H15" stroke="#222" stroke-width="1.2"/></svg>
<div style="left:1703px;top:749px;width:195px;height:1px;background:#111"></div>
<div style="left:1703px;top:750px;width:195px;height:125px;background:#d6d6d6"></div>
<div style="left:1898px;top:750px;width:15px;height:125px;background:#ececec"></div>
<svg style="left:1902px;top:757px;" width="9" height="6" viewBox="0 0 9 6"><path d="M0.5 5.5 L4.5 1 L8.5 5.5 Z" fill="#888"/></svg>
<svg style="left:1902px;top:866px;" width="9" height="6" viewBox="0 0 9 6"><path d="M0.5 0.5 L8.5 0.5 L4.5 5 Z" fill="#888"/></svg>
<div style="left:1705px;top:753px;width:20px;height:19px;background:#a9be2b;border:1px solid #111;box-sizing:border-box"></div>
<span style="left:1737px;top:758.38px;font-size:9.0px;line-height:9.0px;color:#111;font-weight:700;letter-spacing:0.45px;-webkit-text-stroke:0.25px #111;">Pfad</span>
<div style="left:1703px;top:773px;width:195px;height:1px;background:#111"></div>
<div style="left:1724px;top:774px;width:1px;height:72px;background:#111"></div>
<div style="left:1725px;top:797px;width:173px;height:1px;background:#f0f0f0"></div>
<div style="left:1725px;top:821px;width:173px;height:1px;background:#f0f0f0"></div>
<div style="left:1707px;top:777px;width:13px;height:17px;background:#dedede;border:1px solid #f0f0f0;box-sizing:border-box"></div>
<svg style="left:1706px;top:780px;" width="14" height="12" viewBox="0 0 14 12"><path d="M1 6 C4 1.5, 10 1.5, 13 6 C10 10.5, 4 10.5, 1 6 Z" fill="#fff" stroke="#111" stroke-width="1.2"/><circle cx="7" cy="6" r="2.6" fill="#111"/><circle cx="6.2" cy="5.2" r="0.8" fill="#fff"/></svg>
<div style="left:1707px;top:801px;width:13px;height:17px;background:#dedede;border:1px solid #f0f0f0;box-sizing:border-box"></div>
<svg style="left:1706px;top:804px;" width="14" height="12" viewBox="0 0 14 12"><path d="M1 6 C4 1.5, 10 1.5, 13 6 C10 10.5, 4 10.5, 1 6 Z" fill="#fff" stroke="#111" stroke-width="1.2"/><circle cx="7" cy="6" r="2.6" fill="#111"/><circle cx="6.2" cy="5.2" r="0.8" fill="#fff"/></svg>
<div style="left:1707px;top:825px;width:13px;height:17px;background:#dedede;border:1px solid #f0f0f0;box-sizing:border-box"></div>
<svg style="left:1706px;top:828px;" width="14" height="12" viewBox="0 0 14 12"><path d="M1 6 C4 1.5, 10 1.5, 13 6 C10 10.5, 4 10.5, 1 6 Z" fill="#fff" stroke="#8a8a8a" stroke-width="1.2"/><circle cx="7" cy="6" r="2.6" fill="#8a8a8a"/><circle cx="6.2" cy="5.2" r="0.8" fill="#fff"/></svg>
<svg style="left:1726px;top:780px;" width="8" height="12" viewBox="0 0 8 12"><path d="M1.5 1 L6.5 6 L1.5 11 Z" fill="#fff" stroke="#111" stroke-width="1.3"/></svg>
<svg style="left:1726px;top:804px;" width="8" height="12" viewBox="0 0 8 12"><path d="M1.5 1 L6.5 6 L1.5 11 Z" fill="#fff" stroke="#111" stroke-width="1.3"/></svg>
<span style="left:1738px;top:782.38px;font-size:9.0px;line-height:9.0px;color:#2424c8;font-weight:400;letter-spacing:0.45px;-webkit-text-stroke:0.25px #2424c8;">Kontur:</span>
<div style="left:1738px;top:793px;width:34px;height:1px;background:repeating-linear-gradient(90deg,#3030c0 0 1px,transparent 1px 2px)"></div>
<div style="left:1783px;top:777px;width:18px;height:18px;background:#fff;border:2px solid #111;box-shadow:inset 0 0 0 1px #fff;box-sizing:border-box"></div>
<svg style="left:1785px;top:779px;" width="14" height="14" viewBox="0 0 14 14"><path d="M1 13 L13 1" stroke="#b0103a" stroke-width="1.8"/></svg>
<span style="left:1737px;top:806.38px;font-size:9.0px;line-height:9.0px;color:#111;font-weight:400;letter-spacing:0.45px;-webkit-text-stroke:0.25px #111;">Fläche:</span>
<div style="left:1783px;top:801px;width:18px;height:18px;background:#a9be2b;border:2px solid #111;box-shadow:inset 0 0 0 1px #fff;box-sizing:border-box"></div>
<span style="left:1738px;top:830.38px;font-size:9.0px;line-height:9.0px;color:#2424c8;font-weight:400;letter-spacing:0.45px;-webkit-text-stroke:0.25px #2424c8;">Deckkraft:</span>
<div style="left:1738px;top:841px;width:48px;height:1px;background:repeating-linear-gradient(90deg,#3030c0 0 1px,transparent 1px 2px)"></div>
<span style="left:1792px;top:830.38px;font-size:9.0px;line-height:9.0px;color:#111;font-weight:400;letter-spacing:0.45px;-webkit-text-stroke:0.25px #111;">Standard</span>
<div style="left:1703px;top:845px;width:195px;height:1px;background:#111"></div>
<div style="left:1703px;top:875px;width:195px;height:1px;background:#111"></div>
<div style="left:1701px;top:876px;width:214px;height:17px;background:#d6d6d6"></div>
<svg style="left:1713px;top:877px;" width="12" height="12" viewBox="0 0 12 12"><rect x="0.5" y="0.5" width="11" height="11" fill="#444"/><rect x="3" y="3" width="6" height="6" fill="#bbb"/></svg>
<svg style="left:1746px;top:877px;" width="13" height="13" viewBox="0 0 13 13"><rect x="0.5" y="0.5" width="11" height="11" fill="#fff" stroke="#333"/></svg>
<span style="left:1780px;top:878.84px;font-size:12px;line-height:12px;color:#333;font-weight:400;font-family:'Liberation Serif',serif"><i><b>fx</b></i></span>
<svg style="left:1812px;top:877px;" width="13" height="13" viewBox="0 0 13 13"><circle cx="6" cy="6" r="5" fill="none" stroke="#333" stroke-width="1.3"/><path d="M2.5 2.5 L9.5 9.5" stroke="#333" stroke-width="1.3"/></svg>
<svg style="left:1848px;top:877px;" width="12" height="12" viewBox="0 0 12 12"><rect x="1.5" y="1.5" width="9" height="9" fill="#fff" stroke="#aaa"/><rect x="4" y="5" width="4" height="4" fill="none" stroke="#aaa"/></svg>
<svg style="left:1878px;top:877px;" width="12" height="13" viewBox="0 0 12 13"><path d="M2 3 H10 L9 12 H3 Z" fill="#eee" stroke="#999"/><path d="M1 3 H11 M4 1 H8" stroke="#999"/></svg>
<div style="left:1700px;top:893px;width:216px;height:3px;background:#3a3a3a"></div>
<div style="left:1701px;top:896px;width:214px;height:17px;background:linear-gradient(#a4a4a4,#8e8e8e)"></div>
<div style="left:1701px;top:896px;width:73px;height:18px;background:linear-gradient(#ececec,#d6d6d6)"></div>
<svg style="left:1704px;top:900px;" width="7" height="10" viewBox="0 0 7 10"><path d="M0.5 4 L3.5 1 L6.5 4 M0.5 6 L3.5 9 L6.5 6" fill="none" stroke="#222" stroke-width="1.2"/></svg>
<span style="left:1713px;top:900.88px;font-size:9.0px;line-height:9.0px;color:#333;font-weight:400;letter-spacing:0.45px;-webkit-text-stroke:0.25px #333;">Ausrichten</span>
<div style="left:1774px;top:896px;width:1px;height:17px;background:#7a7a7a"></div>
<span style="left:1781px;top:900.88px;font-size:9.0px;line-height:9.0px;color:#2a2a2a;font-weight:400;letter-spacing:0.45px;-webkit-text-stroke:0.25px #2a2a2a;">Pathfinder</span>
<div style="left:1838px;top:896px;width:1px;height:17px;background:#7a7a7a"></div>
<svg style="left:1896px;top:900px;" width="16" height="10" viewBox="0 0 16 10"><path d="M0 3 L4 3 L2 5.5 Z" fill="#222"/><path d="M6 1.5 H15 M6 4.5 H15 M6 7.5 H15" stroke="#222" stroke-width="1.2"/></svg>
<span style="left:1706px;top:919.88px;font-size:9.0px;line-height:9.0px;color:#222;font-weight:400;letter-spacing:0.45px;-webkit-text-stroke:0.25px #222;">Objekte ausrichten:</span>
<svg style="left:1712px;top:931px;" width="17" height="16" viewBox="0 0 17 16"><path d="M1.5 0 V16" stroke="#222"/><rect x="3.5" y="2.5" width="6" height="4" fill="#eee" stroke="#333"/><rect x="3.5" y="9.5" width="12" height="5" fill="#ddd" stroke="#333"/></svg>
<svg style="left:1747px;top:931px;" width="17" height="16" viewBox="0 0 17 16"><path d="M8.5 0 V16" stroke="#222"/><rect x="5.5" y="2.5" width="6" height="4" fill="#eee" stroke="#333"/><rect x="2.5" y="9.5" width="12" height="5" fill="#ddd" stroke="#333"/></svg>
<svg style="left:1781px;top:931px;" width="17" height="16" viewBox="0 0 17 16"><path d="M15.5 0 V16" stroke="#222"/><rect x="7.5" y="2.5" width="6" height="4" fill="#eee" stroke="#333"/><rect x="1.5" y="9.5" width="12" height="5" fill="#ddd" stroke="#333"/></svg>
<svg style="left:1814px;top:931px;" width="17" height="16" viewBox="0 0 17 16"><path d="M0 1.5 H17" stroke="#222"/><rect x="2.5" y="3.5" width="5" height="11" fill="#ddd" stroke="#333"/><rect x="10.5" y="3.5" width="5" height="5" fill="#eee" stroke="#333"/></svg>
<svg style="left:1848px;top:931px;" width="17" height="16" viewBox="0 0 17 16"><path d="M0 8.5 H17" stroke="#222"/><rect x="2.5" y="3.5" width="5" height="10" fill="#ddd" stroke="#333"/><rect x="10.5" y="6.5" width="5" height="5" fill="#eee" stroke="#333"/></svg>
<svg style="left:1881px;top:931px;" width="17" height="16" viewBox="0 0 17 16"><path d="M0 15.5 H17" stroke="#222"/><rect x="2.5" y="2.5" width="5" height="11" fill="#ddd" stroke="#333"/><rect x="10.5" y="8.5" width="5" height="5" fill="#eee" stroke="#333"/></svg>
<div style="left:1706px;top:951px;width:199px;height:1px;background:#f4f4f4"></div>
<div style="left:1706px;top:950px;width:199px;height:1px;background:#c0c0c0"></div>
<span style="left:1706px;top:958.38px;font-size:9.0px;line-height:9.0px;color:#222;font-weight:400;letter-spacing:0.45px;-webkit-text-stroke:0.25px #222;">Objekte verteilen:</span>
<svg style="left:1712px;top:970px;" width="17" height="16" viewBox="0 0 17 16"><path d="M0 2.5 H17 M0 9.5 H17" stroke="#222"/><rect x="5.5" y="0.5" width="7" height="4" fill="#eee" stroke="#333"/><rect x="3.5" y="8.5" width="11" height="5" fill="#ddd" stroke="#333"/></svg>
<svg style="left:1747px;top:970px;" width="17" height="16" viewBox="0 0 17 16"><path d="M0 3.5 H17 M0 11.5 H17" stroke="#222"/><rect x="5.5" y="1.5" width="7" height="4" fill="#eee" stroke="#333"/><rect x="3.5" y="8.5" width="11" height="5" fill="#ddd" stroke="#333"/></svg>
<svg style="left:1781px;top:970px;" width="17" height="16" viewBox="0 0 17 16"><path d="M0 5.5 H17 M0 13.5 H17" stroke="#222"/><rect x="5.5" y="1.5" width="7" height="4" fill="#eee" stroke="#333"/><rect x="3.5" y="8.5" width="11" height="5" fill="#ddd" stroke="#333"/></svg>
<svg style="left:1814px;top:970px;" width="17" height="16" viewBox="0 0 17 16"><path d="M1.5 0 V14 M8.5 0 V14" stroke="#222"/><rect x="2.5" y="2.5" width="4" height="10" fill="#ddd" stroke="#333"/><rect x="9.5" y="4.5" width="5" height="6" fill="#eee" stroke="#333"/></svg>
<svg style="left:1848px;top:970px;" width="17" height="16" viewBox="0 0 17 16"><path d="M3.5 0 V14 M11.5 0 V14" stroke="#222"/><rect x="1.5" y="2.5" width="4" height="10" fill="#ddd" stroke="#333"/><rect x="9.5" y="4.5" width="5" height="6" fill="#eee" stroke="#333"/></svg>
<svg style="left:1881px;top:970px;" width="17" height="16" viewBox="0 0 17 16"><path d="M5.5 0 V14 M13.5 0 V14" stroke="#222"/><rect x="1.5" y="2.5" width="4" height="10" fill="#ddd" stroke="#333"/><rect x="8.5" y="4.5" width="5" height="6" fill="#eee" stroke="#333"/></svg>
<div style="left:1706px;top:989px;width:199px;height:1px;background:#f4f4f4"></div>
<div style="left:1706px;top:988px;width:199px;height:1px;background:#c0c0c0"></div>
<span style="left:1706px;top:996.38px;font-size:9.0px;line-height:9.0px;color:#222;font-weight:400;letter-spacing:0.45px;-webkit-text-stroke:0.25px #222;">Abstand verteilen:</span>
<span style="left:1840px;top:998.38px;font-size:9.0px;line-height:9.0px;color:#222;font-weight:400;letter-spacing:0.45px;-webkit-text-stroke:0.25px #222;">Ausrichten an:</span>
<div style="left:1836px;top:997px;width:1px;height:30px;background:#c0c0c0"></div>
<svg style="left:1711px;top:1009px;" width="19" height="16" viewBox="0 0 19 16"><rect x="5.5" y="0.5" width="8" height="4" fill="#eee" stroke="#333"/><path d="M0 7.5 H19 M0 9.5 H19" stroke="#222"/><rect x="7.5" y="11.5" width="4" height="4" fill="#fff" stroke="#333"/></svg>
<svg style="left:1746px;top:1009px;" width="19" height="16" viewBox="0 0 19 16"><rect x="0.5" y="0.5" width="4" height="4" fill="#fff" stroke="#333"/><path d="M7.5 0 V15 M9.5 0 V15" stroke="#222"/><rect x="12.5" y="3.5" width="5" height="11" fill="#eee" stroke="#333"/></svg>
<div style="left:1777px;top:1009px;width:53px;height:18px;background:#ececec;border:1px solid #c8c8c8;box-sizing:border-box"></div>
<div style="left:1791px;top:1010px;width:38px;height:16px;background:#e2e2e2"></div>
<svg style="left:1779px;top:1011px;" width="10" height="14" viewBox="0 0 10 14"><path d="M2 5 L5 2 L8 5" fill="none" stroke="#aaa"/><path d="M2 9 L5 12 L8 9" fill="none" stroke="#aaa"/></svg>
<span style="left:1796px;top:1014.38px;font-size:9.0px;line-height:9.0px;color:#9a9a9a;font-weight:400;letter-spacing:0.45px;-webkit-text-stroke:0.25px #9a9a9a;">0 mm</span>
<svg style="left:1862px;top:1010px;" width="24" height="15" viewBox="0 0 24 15"><rect x="1.5" y="1.5" width="12" height="12" fill="#eee" stroke="#222"/><rect x="4.5" y="4.5" width="6" height="6" fill="#999" stroke="#222"/><path d="M0 7.5 H15 M7.5 0 V15" stroke="#222"/><path d="M17 6 L22 6 L19.5 10 Z" fill="#222"/></svg>
</body></html>
